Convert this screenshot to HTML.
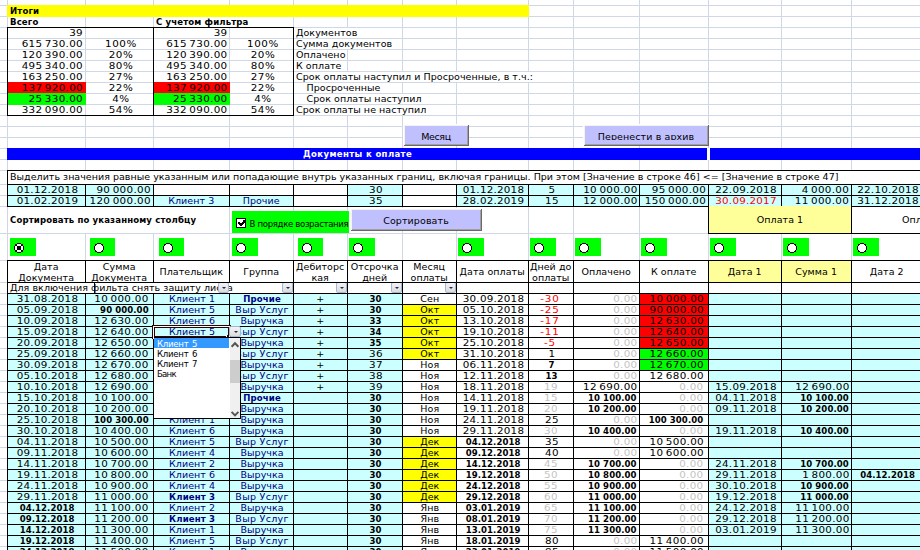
<!DOCTYPE html>
<html lang="ru"><head><meta charset="utf-8"><title>Документы к оплате</title><style>
html,body{margin:0;padding:0;background:#fff;}
body{width:920px;height:550px;overflow:hidden;position:relative;font-family:"DejaVu Sans","Liberation Sans",sans-serif;font-size:9.5px;color:#000;}
.r{position:absolute;}
.t{position:absolute;white-space:nowrap;overflow:visible;letter-spacing:0.055px;}
.n{letter-spacing:0.3px;word-spacing:-1.1px;transform:scaleX(1.09);}
.d{letter-spacing:0.2px;}
.b{font-family:"DejaVu Sans Condensed","DejaVu Sans","Liberation Sans",sans-serif;font-weight:bold;letter-spacing:0.14px;}
.bn{font-family:"DejaVu Sans Condensed","DejaVu Sans","Liberation Sans",sans-serif;font-weight:bold;letter-spacing:0.08px;}
.ctl{font-family:"DejaVu Sans Condensed","Liberation Sans",sans-serif;font-size:9.5px;letter-spacing:-0.33px;}
.btn{position:absolute;box-sizing:border-box;background:#c0c0ff;box-shadow:inset 1px 1px 0 #fff,inset -1px -1px 0 #696969,inset 2px 2px 0 #f4f4ea,inset -2px -2px 0 #a0a0a4;text-align:center;overflow:hidden;}
.btn span{position:relative;display:inline-block;line-height:11px;white-space:nowrap;letter-spacing:0.1px;}
.cb{position:absolute;width:10px;height:10px;box-sizing:border-box;background:#fff;border:1px solid #000;}
.cb svg{position:absolute;left:-1px;top:-1px;}
.fb{position:absolute;width:11px;height:11px;box-sizing:border-box;border:1px solid #a3b6da;border-radius:2px;background:linear-gradient(#f3f3f1,#dcdcda);}
.fb i{position:absolute;left:2.6px;top:3.9px;width:0;height:0;border-left:2.4px solid transparent;border-right:2.4px solid transparent;border-top:2.4px solid #242468;}
</style></head><body>
<div class="r" style="left:0px;top:5px;width:920px;height:1px;background:#d0d7e5;"></div>
<div class="r" style="left:0px;top:16px;width:920px;height:1px;background:#d0d7e5;"></div>
<div class="r" style="left:0px;top:27px;width:920px;height:1px;background:#d0d7e5;"></div>
<div class="r" style="left:0px;top:38px;width:920px;height:1px;background:#d0d7e5;"></div>
<div class="r" style="left:0px;top:49px;width:920px;height:1px;background:#d0d7e5;"></div>
<div class="r" style="left:0px;top:60px;width:920px;height:1px;background:#d0d7e5;"></div>
<div class="r" style="left:0px;top:71px;width:920px;height:1px;background:#d0d7e5;"></div>
<div class="r" style="left:0px;top:82px;width:920px;height:1px;background:#d0d7e5;"></div>
<div class="r" style="left:0px;top:93px;width:920px;height:1px;background:#d0d7e5;"></div>
<div class="r" style="left:0px;top:104px;width:920px;height:1px;background:#d0d7e5;"></div>
<div class="r" style="left:0px;top:115px;width:920px;height:1px;background:#d0d7e5;"></div>
<div class="r" style="left:0px;top:126px;width:920px;height:1px;background:#d0d7e5;"></div>
<div class="r" style="left:0px;top:137px;width:920px;height:1px;background:#d0d7e5;"></div>
<div class="r" style="left:0px;top:148px;width:920px;height:1px;background:#d0d7e5;"></div>
<div class="r" style="left:0px;top:159px;width:920px;height:1px;background:#d0d7e5;"></div>
<div class="r" style="left:0px;top:170px;width:920px;height:1px;background:#d0d7e5;"></div>
<div class="r" style="left:0px;top:184px;width:920px;height:1px;background:#d0d7e5;"></div>
<div class="r" style="left:0px;top:195px;width:920px;height:1px;background:#d0d7e5;"></div>
<div class="r" style="left:0px;top:206px;width:920px;height:1px;background:#d0d7e5;"></div>
<div class="r" style="left:0px;top:233px;width:920px;height:1px;background:#d0d7e5;"></div>
<div class="r" style="left:0px;top:260px;width:920px;height:1px;background:#d0d7e5;"></div>
<div class="r" style="left:0px;top:282px;width:920px;height:1px;background:#d0d7e5;"></div>
<div class="r" style="left:0px;top:293px;width:920px;height:1px;background:#d0d7e5;"></div>
<div class="r" style="left:0px;top:304px;width:920px;height:1px;background:#d0d7e5;"></div>
<div class="r" style="left:0px;top:315px;width:920px;height:1px;background:#d0d7e5;"></div>
<div class="r" style="left:0px;top:326px;width:920px;height:1px;background:#d0d7e5;"></div>
<div class="r" style="left:0px;top:337px;width:920px;height:1px;background:#d0d7e5;"></div>
<div class="r" style="left:0px;top:348px;width:920px;height:1px;background:#d0d7e5;"></div>
<div class="r" style="left:0px;top:359px;width:920px;height:1px;background:#d0d7e5;"></div>
<div class="r" style="left:0px;top:370px;width:920px;height:1px;background:#d0d7e5;"></div>
<div class="r" style="left:0px;top:381px;width:920px;height:1px;background:#d0d7e5;"></div>
<div class="r" style="left:0px;top:392px;width:920px;height:1px;background:#d0d7e5;"></div>
<div class="r" style="left:0px;top:403px;width:920px;height:1px;background:#d0d7e5;"></div>
<div class="r" style="left:0px;top:414px;width:920px;height:1px;background:#d0d7e5;"></div>
<div class="r" style="left:0px;top:425px;width:920px;height:1px;background:#d0d7e5;"></div>
<div class="r" style="left:0px;top:436px;width:920px;height:1px;background:#d0d7e5;"></div>
<div class="r" style="left:0px;top:447px;width:920px;height:1px;background:#d0d7e5;"></div>
<div class="r" style="left:0px;top:458px;width:920px;height:1px;background:#d0d7e5;"></div>
<div class="r" style="left:0px;top:469px;width:920px;height:1px;background:#d0d7e5;"></div>
<div class="r" style="left:0px;top:480px;width:920px;height:1px;background:#d0d7e5;"></div>
<div class="r" style="left:0px;top:491px;width:920px;height:1px;background:#d0d7e5;"></div>
<div class="r" style="left:0px;top:502px;width:920px;height:1px;background:#d0d7e5;"></div>
<div class="r" style="left:0px;top:513px;width:920px;height:1px;background:#d0d7e5;"></div>
<div class="r" style="left:0px;top:524px;width:920px;height:1px;background:#d0d7e5;"></div>
<div class="r" style="left:0px;top:535px;width:920px;height:1px;background:#d0d7e5;"></div>
<div class="r" style="left:0px;top:546px;width:920px;height:1px;background:#d0d7e5;"></div>
<div class="r" style="left:7px;top:0px;width:1px;height:550px;background:#d0d7e5;"></div>
<div class="r" style="left:85px;top:0px;width:1px;height:550px;background:#d0d7e5;"></div>
<div class="r" style="left:153px;top:0px;width:1px;height:550px;background:#d0d7e5;"></div>
<div class="r" style="left:229px;top:0px;width:1px;height:550px;background:#d0d7e5;"></div>
<div class="r" style="left:293px;top:0px;width:1px;height:550px;background:#d0d7e5;"></div>
<div class="r" style="left:347px;top:0px;width:1px;height:550px;background:#d0d7e5;"></div>
<div class="r" style="left:402px;top:0px;width:1px;height:550px;background:#d0d7e5;"></div>
<div class="r" style="left:456px;top:0px;width:1px;height:550px;background:#d0d7e5;"></div>
<div class="r" style="left:528px;top:0px;width:1px;height:550px;background:#d0d7e5;"></div>
<div class="r" style="left:573px;top:0px;width:1px;height:550px;background:#d0d7e5;"></div>
<div class="r" style="left:639px;top:0px;width:1px;height:550px;background:#d0d7e5;"></div>
<div class="r" style="left:708px;top:0px;width:1px;height:550px;background:#d0d7e5;"></div>
<div class="r" style="left:781px;top:0px;width:1px;height:550px;background:#d0d7e5;"></div>
<div class="r" style="left:851px;top:0px;width:1px;height:550px;background:#d0d7e5;"></div>
<div class="r" style="left:7px;top:5px;width:522px;height:12px;background:#ffff00;"></div>
<div class="t b" style="left:10px;top:4.5px;width:200px;height:11px;line-height:11px;">Итоги</div>
<div class="t b" style="left:10px;top:15.5px;width:200px;height:11px;line-height:11px;">Всего</div>
<div class="r" style="left:229px;top:17px;width:1px;height:10px;background:#fff;"></div>
<div class="t b" style="left:156px;top:15.5px;width:200px;height:11px;line-height:11px;">С учетом фильтра</div>
<div class="r" style="left:7px;top:82px;width:79px;height:12px;background:#ff0000;"></div>
<div class="r" style="left:153px;top:82px;width:77px;height:12px;background:#ff0000;"></div>
<div class="r" style="left:7px;top:93px;width:79px;height:12px;background:#00ff00;"></div>
<div class="r" style="left:153px;top:93px;width:77px;height:12px;background:#00ff00;"></div>
<div class="t n" style="left:8px;top:26.5px;width:75px;height:11px;line-height:11px;transform-origin:100% 50%;text-align:right;">39</div>
<div class="t n" style="left:154px;top:26.5px;width:73.5px;height:11px;line-height:11px;transform-origin:100% 50%;text-align:right;">39</div>
<div class="r" style="left:347px;top:28px;width:1px;height:10px;background:#fff;"></div>
<div class="t " style="left:296px;top:26.5px;width:400px;height:11px;line-height:11px;">Документов</div>
<div class="t n" style="left:8px;top:37.5px;width:75px;height:11px;line-height:11px;transform-origin:100% 50%;text-align:right;">615 730.00</div>
<div class="t n" style="left:154px;top:37.5px;width:73.5px;height:11px;line-height:11px;transform-origin:100% 50%;text-align:right;">615 730.00</div>
<div class="t n" style="left:86.6px;top:37.5px;width:68px;height:11px;line-height:11px;transform-origin:50% 50%;text-align:center;letter-spacing:0.5px;">100%</div>
<div class="t n" style="left:230.6px;top:37.5px;width:64px;height:11px;line-height:11px;transform-origin:50% 50%;text-align:center;letter-spacing:0.5px;">100%</div>
<div class="r" style="left:347px;top:39px;width:1px;height:10px;background:#fff;"></div>
<div class="t " style="left:296px;top:37.5px;width:400px;height:11px;line-height:11px;">Сумма документов</div>
<div class="t n" style="left:8px;top:48.5px;width:75px;height:11px;line-height:11px;transform-origin:100% 50%;text-align:right;">120 390.00</div>
<div class="t n" style="left:154px;top:48.5px;width:73.5px;height:11px;line-height:11px;transform-origin:100% 50%;text-align:right;">120 390.00</div>
<div class="t n" style="left:86.6px;top:48.5px;width:68px;height:11px;line-height:11px;transform-origin:50% 50%;text-align:center;letter-spacing:0.5px;">20%</div>
<div class="t n" style="left:230.6px;top:48.5px;width:64px;height:11px;line-height:11px;transform-origin:50% 50%;text-align:center;letter-spacing:0.5px;">20%</div>
<div class="t " style="left:296px;top:48.5px;width:400px;height:11px;line-height:11px;">Оплачено</div>
<div class="t n" style="left:8px;top:59.5px;width:75px;height:11px;line-height:11px;transform-origin:100% 50%;text-align:right;">495 340.00</div>
<div class="t n" style="left:154px;top:59.5px;width:73.5px;height:11px;line-height:11px;transform-origin:100% 50%;text-align:right;">495 340.00</div>
<div class="t n" style="left:86.6px;top:59.5px;width:68px;height:11px;line-height:11px;transform-origin:50% 50%;text-align:center;letter-spacing:0.5px;">80%</div>
<div class="t n" style="left:230.6px;top:59.5px;width:64px;height:11px;line-height:11px;transform-origin:50% 50%;text-align:center;letter-spacing:0.5px;">80%</div>
<div class="t " style="left:296px;top:59.5px;width:400px;height:11px;line-height:11px;">К оплате</div>
<div class="t n" style="left:8px;top:70.5px;width:75px;height:11px;line-height:11px;transform-origin:100% 50%;text-align:right;">163 250.00</div>
<div class="t n" style="left:154px;top:70.5px;width:73.5px;height:11px;line-height:11px;transform-origin:100% 50%;text-align:right;">163 250.00</div>
<div class="t n" style="left:86.6px;top:70.5px;width:68px;height:11px;line-height:11px;transform-origin:50% 50%;text-align:center;letter-spacing:0.5px;">27%</div>
<div class="t n" style="left:230.6px;top:70.5px;width:64px;height:11px;line-height:11px;transform-origin:50% 50%;text-align:center;letter-spacing:0.5px;">27%</div>
<div class="r" style="left:347px;top:72px;width:1px;height:10px;background:#fff;"></div>
<div class="r" style="left:402px;top:72px;width:1px;height:10px;background:#fff;"></div>
<div class="r" style="left:456px;top:72px;width:1px;height:10px;background:#fff;"></div>
<div class="r" style="left:528px;top:72px;width:1px;height:10px;background:#fff;"></div>
<div class="t " style="left:296px;top:70.5px;width:400px;height:11px;line-height:11px;">Срок оплаты наступил и Просроченные, в т.ч.:</div>
<div class="t n" style="left:8px;top:81.5px;width:75px;height:11px;line-height:11px;transform-origin:100% 50%;text-align:right;">137 920.00</div>
<div class="t n" style="left:154px;top:81.5px;width:73.5px;height:11px;line-height:11px;transform-origin:100% 50%;text-align:right;">137 920.00</div>
<div class="t n" style="left:86.6px;top:81.5px;width:68px;height:11px;line-height:11px;transform-origin:50% 50%;text-align:center;letter-spacing:0.5px;">22%</div>
<div class="t n" style="left:230.6px;top:81.5px;width:64px;height:11px;line-height:11px;transform-origin:50% 50%;text-align:center;letter-spacing:0.5px;">22%</div>
<div class="r" style="left:347px;top:83px;width:1px;height:10px;background:#fff;"></div>
<div class="t " style="left:306.5px;top:81.5px;width:400px;height:11px;line-height:11px;">Просроченные</div>
<div class="t n" style="left:8px;top:92.5px;width:75px;height:11px;line-height:11px;transform-origin:100% 50%;text-align:right;">25 330.00</div>
<div class="t n" style="left:154px;top:92.5px;width:73.5px;height:11px;line-height:11px;transform-origin:100% 50%;text-align:right;">25 330.00</div>
<div class="t n" style="left:86.6px;top:92.5px;width:68px;height:11px;line-height:11px;transform-origin:50% 50%;text-align:center;letter-spacing:0.5px;">4%</div>
<div class="t n" style="left:230.6px;top:92.5px;width:64px;height:11px;line-height:11px;transform-origin:50% 50%;text-align:center;letter-spacing:0.5px;">4%</div>
<div class="r" style="left:347px;top:94px;width:1px;height:10px;background:#fff;"></div>
<div class="r" style="left:402px;top:94px;width:1px;height:10px;background:#fff;"></div>
<div class="t " style="left:306.5px;top:92.5px;width:400px;height:11px;line-height:11px;">Срок оплаты наступил</div>
<div class="t n" style="left:8px;top:103.5px;width:75px;height:11px;line-height:11px;transform-origin:100% 50%;text-align:right;">332 090.00</div>
<div class="t n" style="left:154px;top:103.5px;width:73.5px;height:11px;line-height:11px;transform-origin:100% 50%;text-align:right;">332 090.00</div>
<div class="t n" style="left:86.6px;top:103.5px;width:68px;height:11px;line-height:11px;transform-origin:50% 50%;text-align:center;letter-spacing:0.5px;">54%</div>
<div class="t n" style="left:230.6px;top:103.5px;width:64px;height:11px;line-height:11px;transform-origin:50% 50%;text-align:center;letter-spacing:0.5px;">54%</div>
<div class="r" style="left:347px;top:105px;width:1px;height:10px;background:#fff;"></div>
<div class="r" style="left:402px;top:105px;width:1px;height:10px;background:#fff;"></div>
<div class="t " style="left:296px;top:103.5px;width:400px;height:11px;line-height:11px;">Срок оплаты не наступил</div>
<div class="r" style="left:7px;top:27px;width:287px;height:1px;background:#000;"></div>
<div class="r" style="left:7px;top:115px;width:287px;height:1px;background:#000;"></div>
<div class="r" style="left:7px;top:27px;width:1px;height:89px;background:#000;"></div>
<div class="r" style="left:153px;top:27px;width:1px;height:89px;background:#000;"></div>
<div class="r" style="left:293px;top:27px;width:1px;height:89px;background:#000;"></div>
<div class="btn" style="left:403px;top:124px;width:66px;height:22px;"><span style="top:6.6px;letter-spacing:-0.35px;">Месяц</span></div>
<div class="btn" style="left:583px;top:124px;width:126px;height:22px;"><span style="top:6.6px;clip-path:inset(0 0 1.5px 0);">Перенести в архив</span></div>
<div class="r" style="left:7px;top:148px;width:700px;height:12px;background:#0000ff;"></div>
<div class="r" style="left:707px;top:148px;width:3px;height:12px;background:#fff;"></div>
<div class="r" style="left:710px;top:148px;width:210px;height:12px;background:#0000ff;"></div>
<div class="t b" style="left:257.59999999999997px;top:147.5px;width:200px;height:11px;line-height:11px;text-align:center;color:#fff;letter-spacing:0.36px;">Документы к оплате</div>
<div class="r" style="left:7px;top:170px;width:913px;height:15px;background:#fff;"></div>
<div class="t " style="left:10px;top:171px;width:900px;height:11px;line-height:11px;letter-spacing:0.025px;">Выделить значения равные указанным или попадающие внутрь указанных границ, включая границы. При этом [Значение в строке 46] &lt;= [Значение в строке 47]</div>
<div class="r" style="left:7px;top:184px;width:79px;height:12px;background:#ccffff;"></div>
<div class="t n d" style="left:8.6px;top:183.5px;width:77px;height:11px;line-height:11px;transform-origin:50% 50%;text-align:center;">01.12.2018</div>
<div class="r" style="left:85px;top:184px;width:69px;height:12px;background:#ccffff;"></div>
<div class="t n" style="left:86px;top:183.5px;width:64.89999999999999px;height:11px;line-height:11px;transform-origin:100% 50%;text-align:right;">90 000.00</div>
<div class="r" style="left:153px;top:184px;width:77px;height:12px;background:#fff;"></div>
<div class="r" style="left:229px;top:184px;width:65px;height:12px;background:#fff;"></div>
<div class="r" style="left:293px;top:184px;width:55px;height:12px;background:#fff;"></div>
<div class="r" style="left:347px;top:184px;width:56px;height:12px;background:#ccffff;"></div>
<div class="t n" style="left:348.6px;top:183.5px;width:54px;height:11px;line-height:11px;transform-origin:50% 50%;text-align:center;">30</div>
<div class="r" style="left:402px;top:184px;width:55px;height:12px;background:#fff;"></div>
<div class="r" style="left:456px;top:184px;width:73px;height:12px;background:#ccffff;"></div>
<div class="t n d" style="left:457.6px;top:183.5px;width:71px;height:11px;line-height:11px;transform-origin:50% 50%;text-align:center;">01.12.2018</div>
<div class="r" style="left:528px;top:184px;width:46px;height:12px;background:#ccffff;"></div>
<div class="t n" style="left:529.6px;top:183.5px;width:44px;height:11px;line-height:11px;transform-origin:50% 50%;text-align:center;">5</div>
<div class="r" style="left:573px;top:184px;width:67px;height:12px;background:#ccffff;"></div>
<div class="t n" style="left:574px;top:183.5px;width:63.6px;height:11px;line-height:11px;transform-origin:100% 50%;text-align:right;">10 000.00</div>
<div class="r" style="left:639px;top:184px;width:70px;height:12px;background:#ccffff;"></div>
<div class="t n" style="left:640px;top:183.5px;width:66.19999999999999px;height:11px;line-height:11px;transform-origin:100% 50%;text-align:right;">95 000.00</div>
<div class="r" style="left:708px;top:184px;width:74px;height:12px;background:#ccffff;"></div>
<div class="t n d" style="left:709.6px;top:183.5px;width:72px;height:11px;line-height:11px;transform-origin:50% 50%;text-align:center;">22.09.2018</div>
<div class="r" style="left:781px;top:184px;width:71px;height:12px;background:#ccffff;"></div>
<div class="t n" style="left:782px;top:183.5px;width:67.19999999999999px;height:11px;line-height:11px;transform-origin:100% 50%;text-align:right;">4 000.00</div>
<div class="r" style="left:851px;top:184px;width:72px;height:12px;background:#ccffff;"></div>
<div class="t n d" style="left:852.6px;top:183.5px;width:70px;height:11px;line-height:11px;transform-origin:50% 50%;text-align:center;">22.10.2018</div>
<div class="r" style="left:7px;top:195px;width:79px;height:12px;background:#ccffff;"></div>
<div class="t n d" style="left:8.6px;top:194.5px;width:77px;height:11px;line-height:11px;transform-origin:50% 50%;text-align:center;">01.02.2019</div>
<div class="r" style="left:85px;top:195px;width:69px;height:12px;background:#ccffff;"></div>
<div class="t n" style="left:86px;top:194.5px;width:64.89999999999999px;height:11px;line-height:11px;transform-origin:100% 50%;text-align:right;">120 000.00</div>
<div class="r" style="left:153px;top:195px;width:77px;height:12px;background:#ccffff;"></div>
<div class="t " style="left:153.7px;top:194.5px;width:75px;height:11px;line-height:11px;text-align:center;color:#000080;">Клиент 3</div>
<div class="r" style="left:229px;top:195px;width:65px;height:12px;background:#ccffff;"></div>
<div class="t " style="left:229.7px;top:194.5px;width:63px;height:11px;line-height:11px;text-align:center;color:#000080;">Прочие</div>
<div class="r" style="left:293px;top:195px;width:55px;height:12px;background:#fff;"></div>
<div class="r" style="left:347px;top:195px;width:56px;height:12px;background:#ccffff;"></div>
<div class="t n" style="left:348.6px;top:194.5px;width:54px;height:11px;line-height:11px;transform-origin:50% 50%;text-align:center;">35</div>
<div class="r" style="left:402px;top:195px;width:55px;height:12px;background:#fff;"></div>
<div class="r" style="left:456px;top:195px;width:73px;height:12px;background:#ccffff;"></div>
<div class="t n d" style="left:457.6px;top:194.5px;width:71px;height:11px;line-height:11px;transform-origin:50% 50%;text-align:center;">28.02.2019</div>
<div class="r" style="left:528px;top:195px;width:46px;height:12px;background:#ccffff;"></div>
<div class="t n" style="left:529.6px;top:194.5px;width:44px;height:11px;line-height:11px;transform-origin:50% 50%;text-align:center;">15</div>
<div class="r" style="left:573px;top:195px;width:67px;height:12px;background:#ccffff;"></div>
<div class="t n" style="left:574px;top:194.5px;width:63.6px;height:11px;line-height:11px;transform-origin:100% 50%;text-align:right;">12 000.00</div>
<div class="r" style="left:639px;top:195px;width:70px;height:12px;background:#ccffff;"></div>
<div class="t n" style="left:640px;top:194.5px;width:66.19999999999999px;height:11px;line-height:11px;transform-origin:100% 50%;text-align:right;">150 000.00</div>
<div class="r" style="left:708px;top:195px;width:74px;height:12px;background:#ccffff;"></div>
<div class="t n d" style="left:709.6px;top:194.5px;width:72px;height:11px;line-height:11px;transform-origin:50% 50%;text-align:center;color:#ff0000;">30.09.2017</div>
<div class="r" style="left:781px;top:195px;width:71px;height:12px;background:#ccffff;"></div>
<div class="t n" style="left:782px;top:194.5px;width:67.19999999999999px;height:11px;line-height:11px;transform-origin:100% 50%;text-align:right;">11 000.00</div>
<div class="r" style="left:851px;top:195px;width:72px;height:12px;background:#ccffff;"></div>
<div class="t n d" style="left:852.6px;top:194.5px;width:70px;height:11px;line-height:11px;transform-origin:50% 50%;text-align:center;">31.12.2018</div>
<div class="r" style="left:7px;top:170px;width:913px;height:1px;background:#000;"></div>
<div class="r" style="left:7px;top:184px;width:913px;height:1px;background:#000;"></div>
<div class="r" style="left:7px;top:195px;width:913px;height:1px;background:#000;"></div>
<div class="r" style="left:7px;top:206px;width:913px;height:1px;background:#000;"></div>
<div class="r" style="left:7px;top:170px;width:1px;height:37px;background:#000;"></div>
<div class="r" style="left:85px;top:184px;width:1px;height:23px;background:#000;"></div>
<div class="r" style="left:153px;top:184px;width:1px;height:23px;background:#000;"></div>
<div class="r" style="left:229px;top:184px;width:1px;height:23px;background:#000;"></div>
<div class="r" style="left:293px;top:184px;width:1px;height:23px;background:#000;"></div>
<div class="r" style="left:347px;top:184px;width:1px;height:23px;background:#000;"></div>
<div class="r" style="left:402px;top:184px;width:1px;height:23px;background:#000;"></div>
<div class="r" style="left:456px;top:184px;width:1px;height:23px;background:#000;"></div>
<div class="r" style="left:528px;top:184px;width:1px;height:23px;background:#000;"></div>
<div class="r" style="left:573px;top:184px;width:1px;height:23px;background:#000;"></div>
<div class="r" style="left:639px;top:184px;width:1px;height:23px;background:#000;"></div>
<div class="r" style="left:708px;top:184px;width:1px;height:23px;background:#000;"></div>
<div class="r" style="left:781px;top:184px;width:1px;height:23px;background:#000;"></div>
<div class="r" style="left:851px;top:184px;width:1px;height:23px;background:#000;"></div>
<div class="r" style="left:922px;top:184px;width:1px;height:23px;background:#000;"></div>
<div class="r" style="left:85px;top:207px;width:1px;height:26px;background:#fff;"></div>
<div class="r" style="left:153px;top:207px;width:1px;height:26px;background:#fff;"></div>
<div class="t b" style="left:10px;top:214px;width:300px;height:11px;line-height:11px;">Сортировать по указанному столбцу</div>
<div class="r" style="left:232px;top:211px;width:117px;height:22px;background:#00ff00;"></div>
<svg class="r" style="left:236px;top:218px;" width="10" height="10" viewBox="0 0 10 10" shape-rendering="crispEdges"><rect x="0" y="0" width="10" height="10" fill="#000"/><rect x="1" y="1" width="8" height="8" fill="#fff"/><g fill="#000"><rect x="2" y="4" width="1.5" height="2"/><rect x="3" y="5" width="1.5" height="2"/><rect x="4" y="6" width="1.5" height="2"/><rect x="5" y="5" width="1.5" height="2"/><rect x="6" y="4" width="1.5" height="2"/><rect x="7" y="2" width="1.5" height="3"/></g></svg>
<div class="t ctl" style="left:249.6px;top:217.5px;width:110px;height:11px;line-height:11px;">В порядке возрастания</div>
<div class="btn" style="left:350px;top:208px;width:132px;height:23px;"><span style="top:7px;">Сортировать</span></div>
<div class="r" style="left:708px;top:206px;width:144px;height:28px;background:#ffff99;"></div>
<div class="r" style="left:852px;top:207px;width:68px;height:26px;background:#fff;"></div>
<div class="t " style="left:709.0px;top:214px;width:142px;height:11px;line-height:11px;text-align:center;">Оплата 1</div>
<div class="t " style="left:902px;top:214px;width:60px;height:11px;line-height:11px;">Оплата 2</div>
<div class="r" style="left:708px;top:206px;width:1px;height:28px;background:#000;"></div>
<div class="r" style="left:851px;top:206px;width:1px;height:28px;background:#000;"></div>
<div class="r" style="left:708px;top:233px;width:212px;height:1px;background:#000;"></div>
<div class="r" style="left:10px;top:238px;width:26px;height:18px;background:#00ff00;"></div>
<svg class="r" style="left:14px;top:243px;" width="10" height="10" viewBox="0 0 10 10" shape-rendering="crispEdges" fill="#000"><path d="M3 0h4v1h2v2h1v4h-1v2h-2v1h-4v-1h-2v-2h-1v-4h1v-2h2z" fill="#fff"/><rect x="3" y="0" width="1" height="1"/><rect x="4" y="0" width="1" height="1"/><rect x="5" y="0" width="1" height="1"/><rect x="6" y="0" width="1" height="1"/><rect x="1" y="1" width="1" height="1"/><rect x="2" y="1" width="1" height="1"/><rect x="7" y="1" width="1" height="1"/><rect x="8" y="1" width="1" height="1"/><rect x="1" y="2" width="1" height="1"/><rect x="2" y="2" width="1" height="1"/><rect x="7" y="2" width="1" height="1"/><rect x="8" y="2" width="1" height="1"/><rect x="0" y="3" width="1" height="1"/><rect x="3" y="3" width="1" height="1"/><rect x="4" y="3" width="1" height="1"/><rect x="5" y="3" width="1" height="1"/><rect x="6" y="3" width="1" height="1"/><rect x="9" y="3" width="1" height="1"/><rect x="0" y="4" width="1" height="1"/><rect x="3" y="4" width="1" height="1"/><rect x="4" y="4" width="1" height="1"/><rect x="5" y="4" width="1" height="1"/><rect x="6" y="4" width="1" height="1"/><rect x="9" y="4" width="1" height="1"/><rect x="0" y="5" width="1" height="1"/><rect x="3" y="5" width="1" height="1"/><rect x="4" y="5" width="1" height="1"/><rect x="5" y="5" width="1" height="1"/><rect x="6" y="5" width="1" height="1"/><rect x="9" y="5" width="1" height="1"/><rect x="0" y="6" width="1" height="1"/><rect x="3" y="6" width="1" height="1"/><rect x="4" y="6" width="1" height="1"/><rect x="5" y="6" width="1" height="1"/><rect x="6" y="6" width="1" height="1"/><rect x="9" y="6" width="1" height="1"/><rect x="1" y="7" width="1" height="1"/><rect x="2" y="7" width="1" height="1"/><rect x="7" y="7" width="1" height="1"/><rect x="8" y="7" width="1" height="1"/><rect x="1" y="8" width="1" height="1"/><rect x="2" y="8" width="1" height="1"/><rect x="7" y="8" width="1" height="1"/><rect x="8" y="8" width="1" height="1"/><rect x="3" y="9" width="1" height="1"/><rect x="4" y="9" width="1" height="1"/><rect x="5" y="9" width="1" height="1"/><rect x="6" y="9" width="1" height="1"/></svg>
<div class="r" style="left:90px;top:238px;width:25px;height:18px;background:#00ff00;"></div>
<svg class="r" style="left:94px;top:243px;" width="10" height="10" viewBox="0 0 10 10" shape-rendering="crispEdges" fill="#000"><path d="M3 0h4v1h2v2h1v4h-1v2h-2v1h-4v-1h-2v-2h-1v-4h1v-2h2z" fill="#fff"/><rect x="3" y="0" width="1" height="1"/><rect x="4" y="0" width="1" height="1"/><rect x="5" y="0" width="1" height="1"/><rect x="6" y="0" width="1" height="1"/><rect x="1" y="1" width="1" height="1"/><rect x="2" y="1" width="1" height="1"/><rect x="7" y="1" width="1" height="1"/><rect x="8" y="1" width="1" height="1"/><rect x="1" y="2" width="1" height="1"/><rect x="8" y="2" width="1" height="1"/><rect x="0" y="3" width="1" height="1"/><rect x="9" y="3" width="1" height="1"/><rect x="0" y="4" width="1" height="1"/><rect x="9" y="4" width="1" height="1"/><rect x="0" y="5" width="1" height="1"/><rect x="9" y="5" width="1" height="1"/><rect x="0" y="6" width="1" height="1"/><rect x="9" y="6" width="1" height="1"/><rect x="1" y="7" width="1" height="1"/><rect x="8" y="7" width="1" height="1"/><rect x="1" y="8" width="1" height="1"/><rect x="2" y="8" width="1" height="1"/><rect x="7" y="8" width="1" height="1"/><rect x="8" y="8" width="1" height="1"/><rect x="3" y="9" width="1" height="1"/><rect x="4" y="9" width="1" height="1"/><rect x="5" y="9" width="1" height="1"/><rect x="6" y="9" width="1" height="1"/></svg>
<div class="r" style="left:159px;top:238px;width:25px;height:18px;background:#00ff00;"></div>
<svg class="r" style="left:163px;top:243px;" width="10" height="10" viewBox="0 0 10 10" shape-rendering="crispEdges" fill="#000"><path d="M3 0h4v1h2v2h1v4h-1v2h-2v1h-4v-1h-2v-2h-1v-4h1v-2h2z" fill="#fff"/><rect x="3" y="0" width="1" height="1"/><rect x="4" y="0" width="1" height="1"/><rect x="5" y="0" width="1" height="1"/><rect x="6" y="0" width="1" height="1"/><rect x="1" y="1" width="1" height="1"/><rect x="2" y="1" width="1" height="1"/><rect x="7" y="1" width="1" height="1"/><rect x="8" y="1" width="1" height="1"/><rect x="1" y="2" width="1" height="1"/><rect x="8" y="2" width="1" height="1"/><rect x="0" y="3" width="1" height="1"/><rect x="9" y="3" width="1" height="1"/><rect x="0" y="4" width="1" height="1"/><rect x="9" y="4" width="1" height="1"/><rect x="0" y="5" width="1" height="1"/><rect x="9" y="5" width="1" height="1"/><rect x="0" y="6" width="1" height="1"/><rect x="9" y="6" width="1" height="1"/><rect x="1" y="7" width="1" height="1"/><rect x="8" y="7" width="1" height="1"/><rect x="1" y="8" width="1" height="1"/><rect x="2" y="8" width="1" height="1"/><rect x="7" y="8" width="1" height="1"/><rect x="8" y="8" width="1" height="1"/><rect x="3" y="9" width="1" height="1"/><rect x="4" y="9" width="1" height="1"/><rect x="5" y="9" width="1" height="1"/><rect x="6" y="9" width="1" height="1"/></svg>
<div class="r" style="left:232px;top:238px;width:26px;height:18px;background:#00ff00;"></div>
<svg class="r" style="left:236px;top:243px;" width="10" height="10" viewBox="0 0 10 10" shape-rendering="crispEdges" fill="#000"><path d="M3 0h4v1h2v2h1v4h-1v2h-2v1h-4v-1h-2v-2h-1v-4h1v-2h2z" fill="#fff"/><rect x="3" y="0" width="1" height="1"/><rect x="4" y="0" width="1" height="1"/><rect x="5" y="0" width="1" height="1"/><rect x="6" y="0" width="1" height="1"/><rect x="1" y="1" width="1" height="1"/><rect x="2" y="1" width="1" height="1"/><rect x="7" y="1" width="1" height="1"/><rect x="8" y="1" width="1" height="1"/><rect x="1" y="2" width="1" height="1"/><rect x="8" y="2" width="1" height="1"/><rect x="0" y="3" width="1" height="1"/><rect x="9" y="3" width="1" height="1"/><rect x="0" y="4" width="1" height="1"/><rect x="9" y="4" width="1" height="1"/><rect x="0" y="5" width="1" height="1"/><rect x="9" y="5" width="1" height="1"/><rect x="0" y="6" width="1" height="1"/><rect x="9" y="6" width="1" height="1"/><rect x="1" y="7" width="1" height="1"/><rect x="8" y="7" width="1" height="1"/><rect x="1" y="8" width="1" height="1"/><rect x="2" y="8" width="1" height="1"/><rect x="7" y="8" width="1" height="1"/><rect x="8" y="8" width="1" height="1"/><rect x="3" y="9" width="1" height="1"/><rect x="4" y="9" width="1" height="1"/><rect x="5" y="9" width="1" height="1"/><rect x="6" y="9" width="1" height="1"/></svg>
<div class="r" style="left:298px;top:238px;width:25px;height:18px;background:#00ff00;"></div>
<svg class="r" style="left:302px;top:243px;" width="10" height="10" viewBox="0 0 10 10" shape-rendering="crispEdges" fill="#000"><path d="M3 0h4v1h2v2h1v4h-1v2h-2v1h-4v-1h-2v-2h-1v-4h1v-2h2z" fill="#fff"/><rect x="3" y="0" width="1" height="1"/><rect x="4" y="0" width="1" height="1"/><rect x="5" y="0" width="1" height="1"/><rect x="6" y="0" width="1" height="1"/><rect x="1" y="1" width="1" height="1"/><rect x="2" y="1" width="1" height="1"/><rect x="7" y="1" width="1" height="1"/><rect x="8" y="1" width="1" height="1"/><rect x="1" y="2" width="1" height="1"/><rect x="8" y="2" width="1" height="1"/><rect x="0" y="3" width="1" height="1"/><rect x="9" y="3" width="1" height="1"/><rect x="0" y="4" width="1" height="1"/><rect x="9" y="4" width="1" height="1"/><rect x="0" y="5" width="1" height="1"/><rect x="9" y="5" width="1" height="1"/><rect x="0" y="6" width="1" height="1"/><rect x="9" y="6" width="1" height="1"/><rect x="1" y="7" width="1" height="1"/><rect x="8" y="7" width="1" height="1"/><rect x="1" y="8" width="1" height="1"/><rect x="2" y="8" width="1" height="1"/><rect x="7" y="8" width="1" height="1"/><rect x="8" y="8" width="1" height="1"/><rect x="3" y="9" width="1" height="1"/><rect x="4" y="9" width="1" height="1"/><rect x="5" y="9" width="1" height="1"/><rect x="6" y="9" width="1" height="1"/></svg>
<div class="r" style="left:349px;top:238px;width:26px;height:18px;background:#00ff00;"></div>
<svg class="r" style="left:353px;top:243px;" width="10" height="10" viewBox="0 0 10 10" shape-rendering="crispEdges" fill="#000"><path d="M3 0h4v1h2v2h1v4h-1v2h-2v1h-4v-1h-2v-2h-1v-4h1v-2h2z" fill="#fff"/><rect x="3" y="0" width="1" height="1"/><rect x="4" y="0" width="1" height="1"/><rect x="5" y="0" width="1" height="1"/><rect x="6" y="0" width="1" height="1"/><rect x="1" y="1" width="1" height="1"/><rect x="2" y="1" width="1" height="1"/><rect x="7" y="1" width="1" height="1"/><rect x="8" y="1" width="1" height="1"/><rect x="1" y="2" width="1" height="1"/><rect x="8" y="2" width="1" height="1"/><rect x="0" y="3" width="1" height="1"/><rect x="9" y="3" width="1" height="1"/><rect x="0" y="4" width="1" height="1"/><rect x="9" y="4" width="1" height="1"/><rect x="0" y="5" width="1" height="1"/><rect x="9" y="5" width="1" height="1"/><rect x="0" y="6" width="1" height="1"/><rect x="9" y="6" width="1" height="1"/><rect x="1" y="7" width="1" height="1"/><rect x="8" y="7" width="1" height="1"/><rect x="1" y="8" width="1" height="1"/><rect x="2" y="8" width="1" height="1"/><rect x="7" y="8" width="1" height="1"/><rect x="8" y="8" width="1" height="1"/><rect x="3" y="9" width="1" height="1"/><rect x="4" y="9" width="1" height="1"/><rect x="5" y="9" width="1" height="1"/><rect x="6" y="9" width="1" height="1"/></svg>
<div class="r" style="left:458px;top:238px;width:26px;height:18px;background:#00ff00;"></div>
<svg class="r" style="left:462px;top:243px;" width="10" height="10" viewBox="0 0 10 10" shape-rendering="crispEdges" fill="#000"><path d="M3 0h4v1h2v2h1v4h-1v2h-2v1h-4v-1h-2v-2h-1v-4h1v-2h2z" fill="#fff"/><rect x="3" y="0" width="1" height="1"/><rect x="4" y="0" width="1" height="1"/><rect x="5" y="0" width="1" height="1"/><rect x="6" y="0" width="1" height="1"/><rect x="1" y="1" width="1" height="1"/><rect x="2" y="1" width="1" height="1"/><rect x="7" y="1" width="1" height="1"/><rect x="8" y="1" width="1" height="1"/><rect x="1" y="2" width="1" height="1"/><rect x="8" y="2" width="1" height="1"/><rect x="0" y="3" width="1" height="1"/><rect x="9" y="3" width="1" height="1"/><rect x="0" y="4" width="1" height="1"/><rect x="9" y="4" width="1" height="1"/><rect x="0" y="5" width="1" height="1"/><rect x="9" y="5" width="1" height="1"/><rect x="0" y="6" width="1" height="1"/><rect x="9" y="6" width="1" height="1"/><rect x="1" y="7" width="1" height="1"/><rect x="8" y="7" width="1" height="1"/><rect x="1" y="8" width="1" height="1"/><rect x="2" y="8" width="1" height="1"/><rect x="7" y="8" width="1" height="1"/><rect x="8" y="8" width="1" height="1"/><rect x="3" y="9" width="1" height="1"/><rect x="4" y="9" width="1" height="1"/><rect x="5" y="9" width="1" height="1"/><rect x="6" y="9" width="1" height="1"/></svg>
<div class="r" style="left:530px;top:238px;width:26px;height:18px;background:#00ff00;"></div>
<svg class="r" style="left:534px;top:243px;" width="10" height="10" viewBox="0 0 10 10" shape-rendering="crispEdges" fill="#000"><path d="M3 0h4v1h2v2h1v4h-1v2h-2v1h-4v-1h-2v-2h-1v-4h1v-2h2z" fill="#fff"/><rect x="3" y="0" width="1" height="1"/><rect x="4" y="0" width="1" height="1"/><rect x="5" y="0" width="1" height="1"/><rect x="6" y="0" width="1" height="1"/><rect x="1" y="1" width="1" height="1"/><rect x="2" y="1" width="1" height="1"/><rect x="7" y="1" width="1" height="1"/><rect x="8" y="1" width="1" height="1"/><rect x="1" y="2" width="1" height="1"/><rect x="8" y="2" width="1" height="1"/><rect x="0" y="3" width="1" height="1"/><rect x="9" y="3" width="1" height="1"/><rect x="0" y="4" width="1" height="1"/><rect x="9" y="4" width="1" height="1"/><rect x="0" y="5" width="1" height="1"/><rect x="9" y="5" width="1" height="1"/><rect x="0" y="6" width="1" height="1"/><rect x="9" y="6" width="1" height="1"/><rect x="1" y="7" width="1" height="1"/><rect x="8" y="7" width="1" height="1"/><rect x="1" y="8" width="1" height="1"/><rect x="2" y="8" width="1" height="1"/><rect x="7" y="8" width="1" height="1"/><rect x="8" y="8" width="1" height="1"/><rect x="3" y="9" width="1" height="1"/><rect x="4" y="9" width="1" height="1"/><rect x="5" y="9" width="1" height="1"/><rect x="6" y="9" width="1" height="1"/></svg>
<div class="r" style="left:575px;top:238px;width:26px;height:18px;background:#00ff00;"></div>
<svg class="r" style="left:579px;top:243px;" width="10" height="10" viewBox="0 0 10 10" shape-rendering="crispEdges" fill="#000"><path d="M3 0h4v1h2v2h1v4h-1v2h-2v1h-4v-1h-2v-2h-1v-4h1v-2h2z" fill="#fff"/><rect x="3" y="0" width="1" height="1"/><rect x="4" y="0" width="1" height="1"/><rect x="5" y="0" width="1" height="1"/><rect x="6" y="0" width="1" height="1"/><rect x="1" y="1" width="1" height="1"/><rect x="2" y="1" width="1" height="1"/><rect x="7" y="1" width="1" height="1"/><rect x="8" y="1" width="1" height="1"/><rect x="1" y="2" width="1" height="1"/><rect x="8" y="2" width="1" height="1"/><rect x="0" y="3" width="1" height="1"/><rect x="9" y="3" width="1" height="1"/><rect x="0" y="4" width="1" height="1"/><rect x="9" y="4" width="1" height="1"/><rect x="0" y="5" width="1" height="1"/><rect x="9" y="5" width="1" height="1"/><rect x="0" y="6" width="1" height="1"/><rect x="9" y="6" width="1" height="1"/><rect x="1" y="7" width="1" height="1"/><rect x="8" y="7" width="1" height="1"/><rect x="1" y="8" width="1" height="1"/><rect x="2" y="8" width="1" height="1"/><rect x="7" y="8" width="1" height="1"/><rect x="8" y="8" width="1" height="1"/><rect x="3" y="9" width="1" height="1"/><rect x="4" y="9" width="1" height="1"/><rect x="5" y="9" width="1" height="1"/><rect x="6" y="9" width="1" height="1"/></svg>
<div class="r" style="left:641px;top:238px;width:26px;height:18px;background:#00ff00;"></div>
<svg class="r" style="left:645px;top:243px;" width="10" height="10" viewBox="0 0 10 10" shape-rendering="crispEdges" fill="#000"><path d="M3 0h4v1h2v2h1v4h-1v2h-2v1h-4v-1h-2v-2h-1v-4h1v-2h2z" fill="#fff"/><rect x="3" y="0" width="1" height="1"/><rect x="4" y="0" width="1" height="1"/><rect x="5" y="0" width="1" height="1"/><rect x="6" y="0" width="1" height="1"/><rect x="1" y="1" width="1" height="1"/><rect x="2" y="1" width="1" height="1"/><rect x="7" y="1" width="1" height="1"/><rect x="8" y="1" width="1" height="1"/><rect x="1" y="2" width="1" height="1"/><rect x="8" y="2" width="1" height="1"/><rect x="0" y="3" width="1" height="1"/><rect x="9" y="3" width="1" height="1"/><rect x="0" y="4" width="1" height="1"/><rect x="9" y="4" width="1" height="1"/><rect x="0" y="5" width="1" height="1"/><rect x="9" y="5" width="1" height="1"/><rect x="0" y="6" width="1" height="1"/><rect x="9" y="6" width="1" height="1"/><rect x="1" y="7" width="1" height="1"/><rect x="8" y="7" width="1" height="1"/><rect x="1" y="8" width="1" height="1"/><rect x="2" y="8" width="1" height="1"/><rect x="7" y="8" width="1" height="1"/><rect x="8" y="8" width="1" height="1"/><rect x="3" y="9" width="1" height="1"/><rect x="4" y="9" width="1" height="1"/><rect x="5" y="9" width="1" height="1"/><rect x="6" y="9" width="1" height="1"/></svg>
<div class="r" style="left:710px;top:238px;width:26px;height:18px;background:#00ff00;"></div>
<svg class="r" style="left:714px;top:243px;" width="10" height="10" viewBox="0 0 10 10" shape-rendering="crispEdges" fill="#000"><path d="M3 0h4v1h2v2h1v4h-1v2h-2v1h-4v-1h-2v-2h-1v-4h1v-2h2z" fill="#fff"/><rect x="3" y="0" width="1" height="1"/><rect x="4" y="0" width="1" height="1"/><rect x="5" y="0" width="1" height="1"/><rect x="6" y="0" width="1" height="1"/><rect x="1" y="1" width="1" height="1"/><rect x="2" y="1" width="1" height="1"/><rect x="7" y="1" width="1" height="1"/><rect x="8" y="1" width="1" height="1"/><rect x="1" y="2" width="1" height="1"/><rect x="8" y="2" width="1" height="1"/><rect x="0" y="3" width="1" height="1"/><rect x="9" y="3" width="1" height="1"/><rect x="0" y="4" width="1" height="1"/><rect x="9" y="4" width="1" height="1"/><rect x="0" y="5" width="1" height="1"/><rect x="9" y="5" width="1" height="1"/><rect x="0" y="6" width="1" height="1"/><rect x="9" y="6" width="1" height="1"/><rect x="1" y="7" width="1" height="1"/><rect x="8" y="7" width="1" height="1"/><rect x="1" y="8" width="1" height="1"/><rect x="2" y="8" width="1" height="1"/><rect x="7" y="8" width="1" height="1"/><rect x="8" y="8" width="1" height="1"/><rect x="3" y="9" width="1" height="1"/><rect x="4" y="9" width="1" height="1"/><rect x="5" y="9" width="1" height="1"/><rect x="6" y="9" width="1" height="1"/></svg>
<div class="r" style="left:783px;top:238px;width:26px;height:18px;background:#00ff00;"></div>
<svg class="r" style="left:787px;top:243px;" width="10" height="10" viewBox="0 0 10 10" shape-rendering="crispEdges" fill="#000"><path d="M3 0h4v1h2v2h1v4h-1v2h-2v1h-4v-1h-2v-2h-1v-4h1v-2h2z" fill="#fff"/><rect x="3" y="0" width="1" height="1"/><rect x="4" y="0" width="1" height="1"/><rect x="5" y="0" width="1" height="1"/><rect x="6" y="0" width="1" height="1"/><rect x="1" y="1" width="1" height="1"/><rect x="2" y="1" width="1" height="1"/><rect x="7" y="1" width="1" height="1"/><rect x="8" y="1" width="1" height="1"/><rect x="1" y="2" width="1" height="1"/><rect x="8" y="2" width="1" height="1"/><rect x="0" y="3" width="1" height="1"/><rect x="9" y="3" width="1" height="1"/><rect x="0" y="4" width="1" height="1"/><rect x="9" y="4" width="1" height="1"/><rect x="0" y="5" width="1" height="1"/><rect x="9" y="5" width="1" height="1"/><rect x="0" y="6" width="1" height="1"/><rect x="9" y="6" width="1" height="1"/><rect x="1" y="7" width="1" height="1"/><rect x="8" y="7" width="1" height="1"/><rect x="1" y="8" width="1" height="1"/><rect x="2" y="8" width="1" height="1"/><rect x="7" y="8" width="1" height="1"/><rect x="8" y="8" width="1" height="1"/><rect x="3" y="9" width="1" height="1"/><rect x="4" y="9" width="1" height="1"/><rect x="5" y="9" width="1" height="1"/><rect x="6" y="9" width="1" height="1"/></svg>
<div class="r" style="left:853px;top:238px;width:26px;height:18px;background:#00ff00;"></div>
<svg class="r" style="left:857px;top:243px;" width="10" height="10" viewBox="0 0 10 10" shape-rendering="crispEdges" fill="#000"><path d="M3 0h4v1h2v2h1v4h-1v2h-2v1h-4v-1h-2v-2h-1v-4h1v-2h2z" fill="#fff"/><rect x="3" y="0" width="1" height="1"/><rect x="4" y="0" width="1" height="1"/><rect x="5" y="0" width="1" height="1"/><rect x="6" y="0" width="1" height="1"/><rect x="1" y="1" width="1" height="1"/><rect x="2" y="1" width="1" height="1"/><rect x="7" y="1" width="1" height="1"/><rect x="8" y="1" width="1" height="1"/><rect x="1" y="2" width="1" height="1"/><rect x="8" y="2" width="1" height="1"/><rect x="0" y="3" width="1" height="1"/><rect x="9" y="3" width="1" height="1"/><rect x="0" y="4" width="1" height="1"/><rect x="9" y="4" width="1" height="1"/><rect x="0" y="5" width="1" height="1"/><rect x="9" y="5" width="1" height="1"/><rect x="0" y="6" width="1" height="1"/><rect x="9" y="6" width="1" height="1"/><rect x="1" y="7" width="1" height="1"/><rect x="8" y="7" width="1" height="1"/><rect x="1" y="8" width="1" height="1"/><rect x="2" y="8" width="1" height="1"/><rect x="7" y="8" width="1" height="1"/><rect x="8" y="8" width="1" height="1"/><rect x="3" y="9" width="1" height="1"/><rect x="4" y="9" width="1" height="1"/><rect x="5" y="9" width="1" height="1"/><rect x="6" y="9" width="1" height="1"/></svg>
<div class="r" style="left:7px;top:260px;width:79px;height:23px;background:#fff;"></div>
<div class="t " style="left:7.7px;top:260.5px;width:77px;height:11px;line-height:11px;text-align:center;">Дата</div>
<div class="t " style="left:7.7px;top:271.8px;width:77px;height:11px;line-height:11px;text-align:center;">Документа</div>
<div class="r" style="left:85px;top:260px;width:69px;height:23px;background:#fff;"></div>
<div class="t " style="left:85.7px;top:260.5px;width:67px;height:11px;line-height:11px;text-align:center;">Сумма</div>
<div class="t " style="left:85.7px;top:271.8px;width:67px;height:11px;line-height:11px;text-align:center;">Документа</div>
<div class="r" style="left:153px;top:260px;width:77px;height:23px;background:#fff;"></div>
<div class="t " style="left:153.7px;top:265.5px;width:75px;height:11px;line-height:11px;text-align:center;">Плательщик</div>
<div class="r" style="left:229px;top:260px;width:65px;height:23px;background:#fff;"></div>
<div class="t " style="left:229.7px;top:265.5px;width:63px;height:11px;line-height:11px;text-align:center;">Группа</div>
<div class="r" style="left:293px;top:260px;width:55px;height:23px;background:#fff;"></div>
<div class="t " style="left:293.7px;top:260.5px;width:53px;height:11px;line-height:11px;text-align:center;">Дебиторс</div>
<div class="t " style="left:293.7px;top:271.8px;width:53px;height:11px;line-height:11px;text-align:center;">кая</div>
<div class="r" style="left:347px;top:260px;width:56px;height:23px;background:#fff;"></div>
<div class="t " style="left:347.7px;top:260.5px;width:54px;height:11px;line-height:11px;text-align:center;">Отсрочка</div>
<div class="t " style="left:347.7px;top:271.8px;width:54px;height:11px;line-height:11px;text-align:center;">дней</div>
<div class="r" style="left:402px;top:260px;width:55px;height:23px;background:#fff;"></div>
<div class="t " style="left:402.7px;top:260.5px;width:53px;height:11px;line-height:11px;text-align:center;">Месяц</div>
<div class="t " style="left:402.7px;top:271.8px;width:53px;height:11px;line-height:11px;text-align:center;">оплаты</div>
<div class="r" style="left:456px;top:260px;width:73px;height:23px;background:#fff;"></div>
<div class="t " style="left:456.7px;top:265.5px;width:71px;height:11px;line-height:11px;text-align:center;">Дата оплаты</div>
<div class="r" style="left:528px;top:260px;width:46px;height:23px;background:#fff;"></div>
<div class="t " style="left:528.7px;top:260.5px;width:44px;height:11px;line-height:11px;text-align:center;">Дней до</div>
<div class="t " style="left:528.7px;top:271.8px;width:44px;height:11px;line-height:11px;text-align:center;">оплаты</div>
<div class="r" style="left:573px;top:260px;width:67px;height:23px;background:#fff;"></div>
<div class="t " style="left:573.7px;top:265.5px;width:65px;height:11px;line-height:11px;text-align:center;">Оплачено</div>
<div class="r" style="left:639px;top:260px;width:70px;height:23px;background:#fff;"></div>
<div class="t " style="left:639.7px;top:265.5px;width:68px;height:11px;line-height:11px;text-align:center;">К оплате</div>
<div class="r" style="left:708px;top:260px;width:74px;height:23px;background:#ffff99;"></div>
<div class="t " style="left:708.7px;top:265.5px;width:72px;height:11px;line-height:11px;text-align:center;">Дата 1</div>
<div class="r" style="left:781px;top:260px;width:71px;height:23px;background:#ffff99;"></div>
<div class="t " style="left:781.7px;top:265.5px;width:69px;height:11px;line-height:11px;text-align:center;">Сумма 1</div>
<div class="r" style="left:851px;top:260px;width:72px;height:23px;background:#fff;"></div>
<div class="t " style="left:851.7px;top:265.5px;width:70px;height:11px;line-height:11px;text-align:center;">Дата 2</div>
<div class="r" style="left:7px;top:282px;width:913px;height:12px;background:#fff;"></div>
<div class="t " style="left:10px;top:281.5px;width:300px;height:11px;line-height:11px;">Для включения фильта снять защиту листа</div>
<div class="fb" style="left:218px;top:282px;width:11px;"><i style="left:2.6px"></i></div>
<div class="fb" style="left:282px;top:282px;width:11px;"><i style="left:2.6px"></i></div>
<div class="fb" style="left:336px;top:282px;width:11px;"><i style="left:2.6px"></i></div>
<div class="fb" style="left:391px;top:282px;width:11px;"><i style="left:2.6px"></i></div>
<div class="fb" style="left:445px;top:282px;width:11px;"><i style="left:2.6px"></i></div>
<div class="r" style="left:7px;top:293px;width:79px;height:12px;background:#ccffff;"></div>
<div class="r" style="left:85px;top:293px;width:69px;height:12px;background:#ccffff;"></div>
<div class="r" style="left:153px;top:293px;width:77px;height:12px;background:#ccffff;"></div>
<div class="r" style="left:229px;top:293px;width:65px;height:12px;background:#ccffff;"></div>
<div class="r" style="left:293px;top:293px;width:55px;height:12px;background:#ccffff;"></div>
<div class="r" style="left:347px;top:293px;width:56px;height:12px;background:#ccffff;"></div>
<div class="r" style="left:402px;top:293px;width:55px;height:12px;background:#fff;"></div>
<div class="r" style="left:456px;top:293px;width:73px;height:12px;background:#fff;"></div>
<div class="r" style="left:528px;top:293px;width:46px;height:12px;background:#fff;"></div>
<div class="r" style="left:573px;top:293px;width:67px;height:12px;background:#fff;"></div>
<div class="r" style="left:639px;top:293px;width:70px;height:12px;background:#ff0000;"></div>
<div class="r" style="left:708px;top:293px;width:74px;height:12px;background:#ccffff;"></div>
<div class="r" style="left:781px;top:293px;width:71px;height:12px;background:#ccffff;"></div>
<div class="r" style="left:851px;top:293px;width:72px;height:12px;background:#ccffff;"></div>
<div class="r" style="left:7px;top:304px;width:79px;height:12px;background:#ccffff;"></div>
<div class="r" style="left:85px;top:304px;width:69px;height:12px;background:#ccffff;"></div>
<div class="r" style="left:153px;top:304px;width:77px;height:12px;background:#ccffff;"></div>
<div class="r" style="left:229px;top:304px;width:65px;height:12px;background:#ccffff;"></div>
<div class="r" style="left:293px;top:304px;width:55px;height:12px;background:#ccffff;"></div>
<div class="r" style="left:347px;top:304px;width:56px;height:12px;background:#ccffff;"></div>
<div class="r" style="left:402px;top:304px;width:55px;height:12px;background:#ffff00;"></div>
<div class="r" style="left:456px;top:304px;width:73px;height:12px;background:#fff;"></div>
<div class="r" style="left:528px;top:304px;width:46px;height:12px;background:#fff;"></div>
<div class="r" style="left:573px;top:304px;width:67px;height:12px;background:#fff;"></div>
<div class="r" style="left:639px;top:304px;width:70px;height:12px;background:#ff0000;"></div>
<div class="r" style="left:708px;top:304px;width:74px;height:12px;background:#ccffff;"></div>
<div class="r" style="left:781px;top:304px;width:71px;height:12px;background:#ccffff;"></div>
<div class="r" style="left:851px;top:304px;width:72px;height:12px;background:#ccffff;"></div>
<div class="r" style="left:7px;top:315px;width:79px;height:12px;background:#ccffff;"></div>
<div class="r" style="left:85px;top:315px;width:69px;height:12px;background:#ccffff;"></div>
<div class="r" style="left:153px;top:315px;width:77px;height:12px;background:#ccffff;"></div>
<div class="r" style="left:229px;top:315px;width:65px;height:12px;background:#ccffff;"></div>
<div class="r" style="left:293px;top:315px;width:55px;height:12px;background:#ccffff;"></div>
<div class="r" style="left:347px;top:315px;width:56px;height:12px;background:#ccffff;"></div>
<div class="r" style="left:402px;top:315px;width:55px;height:12px;background:#ffff00;"></div>
<div class="r" style="left:456px;top:315px;width:73px;height:12px;background:#fff;"></div>
<div class="r" style="left:528px;top:315px;width:46px;height:12px;background:#fff;"></div>
<div class="r" style="left:573px;top:315px;width:67px;height:12px;background:#fff;"></div>
<div class="r" style="left:639px;top:315px;width:70px;height:12px;background:#ff0000;"></div>
<div class="r" style="left:708px;top:315px;width:74px;height:12px;background:#ccffff;"></div>
<div class="r" style="left:781px;top:315px;width:71px;height:12px;background:#ccffff;"></div>
<div class="r" style="left:851px;top:315px;width:72px;height:12px;background:#ccffff;"></div>
<div class="r" style="left:7px;top:326px;width:79px;height:12px;background:#ccffff;"></div>
<div class="r" style="left:85px;top:326px;width:69px;height:12px;background:#ccffff;"></div>
<div class="r" style="left:153px;top:326px;width:77px;height:12px;background:#ccffff;"></div>
<div class="r" style="left:229px;top:326px;width:65px;height:12px;background:#ccffff;"></div>
<div class="r" style="left:293px;top:326px;width:55px;height:12px;background:#ccffff;"></div>
<div class="r" style="left:347px;top:326px;width:56px;height:12px;background:#ccffff;"></div>
<div class="r" style="left:402px;top:326px;width:55px;height:12px;background:#ffff00;"></div>
<div class="r" style="left:456px;top:326px;width:73px;height:12px;background:#fff;"></div>
<div class="r" style="left:528px;top:326px;width:46px;height:12px;background:#fff;"></div>
<div class="r" style="left:573px;top:326px;width:67px;height:12px;background:#fff;"></div>
<div class="r" style="left:639px;top:326px;width:70px;height:12px;background:#ff0000;"></div>
<div class="r" style="left:708px;top:326px;width:74px;height:12px;background:#ccffff;"></div>
<div class="r" style="left:781px;top:326px;width:71px;height:12px;background:#ccffff;"></div>
<div class="r" style="left:851px;top:326px;width:72px;height:12px;background:#ccffff;"></div>
<div class="r" style="left:7px;top:337px;width:79px;height:12px;background:#ccffff;"></div>
<div class="r" style="left:85px;top:337px;width:69px;height:12px;background:#ccffff;"></div>
<div class="r" style="left:153px;top:337px;width:77px;height:12px;background:#ccffff;"></div>
<div class="r" style="left:229px;top:337px;width:65px;height:12px;background:#ccffff;"></div>
<div class="r" style="left:293px;top:337px;width:55px;height:12px;background:#ccffff;"></div>
<div class="r" style="left:347px;top:337px;width:56px;height:12px;background:#ccffff;"></div>
<div class="r" style="left:402px;top:337px;width:55px;height:12px;background:#ffff00;"></div>
<div class="r" style="left:456px;top:337px;width:73px;height:12px;background:#fff;"></div>
<div class="r" style="left:528px;top:337px;width:46px;height:12px;background:#fff;"></div>
<div class="r" style="left:573px;top:337px;width:67px;height:12px;background:#fff;"></div>
<div class="r" style="left:639px;top:337px;width:70px;height:12px;background:#ff0000;"></div>
<div class="r" style="left:708px;top:337px;width:74px;height:12px;background:#ccffff;"></div>
<div class="r" style="left:781px;top:337px;width:71px;height:12px;background:#ccffff;"></div>
<div class="r" style="left:851px;top:337px;width:72px;height:12px;background:#ccffff;"></div>
<div class="r" style="left:7px;top:348px;width:79px;height:12px;background:#ccffff;"></div>
<div class="r" style="left:85px;top:348px;width:69px;height:12px;background:#ccffff;"></div>
<div class="r" style="left:153px;top:348px;width:77px;height:12px;background:#ccffff;"></div>
<div class="r" style="left:229px;top:348px;width:65px;height:12px;background:#ccffff;"></div>
<div class="r" style="left:293px;top:348px;width:55px;height:12px;background:#ccffff;"></div>
<div class="r" style="left:347px;top:348px;width:56px;height:12px;background:#ccffff;"></div>
<div class="r" style="left:402px;top:348px;width:55px;height:12px;background:#ffff00;"></div>
<div class="r" style="left:456px;top:348px;width:73px;height:12px;background:#fff;"></div>
<div class="r" style="left:528px;top:348px;width:46px;height:12px;background:#fff;"></div>
<div class="r" style="left:573px;top:348px;width:67px;height:12px;background:#fff;"></div>
<div class="r" style="left:639px;top:348px;width:70px;height:12px;background:#00ff00;"></div>
<div class="r" style="left:708px;top:348px;width:74px;height:12px;background:#ccffff;"></div>
<div class="r" style="left:781px;top:348px;width:71px;height:12px;background:#ccffff;"></div>
<div class="r" style="left:851px;top:348px;width:72px;height:12px;background:#ccffff;"></div>
<div class="r" style="left:7px;top:359px;width:79px;height:12px;background:#ccffff;"></div>
<div class="r" style="left:85px;top:359px;width:69px;height:12px;background:#ccffff;"></div>
<div class="r" style="left:153px;top:359px;width:77px;height:12px;background:#ccffff;"></div>
<div class="r" style="left:229px;top:359px;width:65px;height:12px;background:#ccffff;"></div>
<div class="r" style="left:293px;top:359px;width:55px;height:12px;background:#ccffff;"></div>
<div class="r" style="left:347px;top:359px;width:56px;height:12px;background:#ccffff;"></div>
<div class="r" style="left:402px;top:359px;width:55px;height:12px;background:#fff;"></div>
<div class="r" style="left:456px;top:359px;width:73px;height:12px;background:#fff;"></div>
<div class="r" style="left:528px;top:359px;width:46px;height:12px;background:#fff;"></div>
<div class="r" style="left:573px;top:359px;width:67px;height:12px;background:#fff;"></div>
<div class="r" style="left:639px;top:359px;width:70px;height:12px;background:#00ff00;"></div>
<div class="r" style="left:708px;top:359px;width:74px;height:12px;background:#ccffff;"></div>
<div class="r" style="left:781px;top:359px;width:71px;height:12px;background:#ccffff;"></div>
<div class="r" style="left:851px;top:359px;width:72px;height:12px;background:#ccffff;"></div>
<div class="r" style="left:7px;top:370px;width:79px;height:12px;background:#ccffff;"></div>
<div class="r" style="left:85px;top:370px;width:69px;height:12px;background:#ccffff;"></div>
<div class="r" style="left:153px;top:370px;width:77px;height:12px;background:#ccffff;"></div>
<div class="r" style="left:229px;top:370px;width:65px;height:12px;background:#ccffff;"></div>
<div class="r" style="left:293px;top:370px;width:55px;height:12px;background:#ccffff;"></div>
<div class="r" style="left:347px;top:370px;width:56px;height:12px;background:#ccffff;"></div>
<div class="r" style="left:402px;top:370px;width:55px;height:12px;background:#fff;"></div>
<div class="r" style="left:456px;top:370px;width:73px;height:12px;background:#fff;"></div>
<div class="r" style="left:528px;top:370px;width:46px;height:12px;background:#fff;"></div>
<div class="r" style="left:573px;top:370px;width:67px;height:12px;background:#fff;"></div>
<div class="r" style="left:639px;top:370px;width:70px;height:12px;background:#fff;"></div>
<div class="r" style="left:708px;top:370px;width:74px;height:12px;background:#ccffff;"></div>
<div class="r" style="left:781px;top:370px;width:71px;height:12px;background:#ccffff;"></div>
<div class="r" style="left:851px;top:370px;width:72px;height:12px;background:#ccffff;"></div>
<div class="r" style="left:7px;top:381px;width:79px;height:12px;background:#ccffff;"></div>
<div class="r" style="left:85px;top:381px;width:69px;height:12px;background:#ccffff;"></div>
<div class="r" style="left:153px;top:381px;width:77px;height:12px;background:#ccffff;"></div>
<div class="r" style="left:229px;top:381px;width:65px;height:12px;background:#ccffff;"></div>
<div class="r" style="left:293px;top:381px;width:55px;height:12px;background:#ccffff;"></div>
<div class="r" style="left:347px;top:381px;width:56px;height:12px;background:#ccffff;"></div>
<div class="r" style="left:402px;top:381px;width:55px;height:12px;background:#fff;"></div>
<div class="r" style="left:456px;top:381px;width:73px;height:12px;background:#fff;"></div>
<div class="r" style="left:528px;top:381px;width:46px;height:12px;background:#fff;"></div>
<div class="r" style="left:573px;top:381px;width:67px;height:12px;background:#fff;"></div>
<div class="r" style="left:639px;top:381px;width:70px;height:12px;background:#fff;"></div>
<div class="r" style="left:708px;top:381px;width:74px;height:12px;background:#ccffff;"></div>
<div class="r" style="left:781px;top:381px;width:71px;height:12px;background:#ccffff;"></div>
<div class="r" style="left:851px;top:381px;width:72px;height:12px;background:#ccffff;"></div>
<div class="r" style="left:7px;top:392px;width:79px;height:12px;background:#ccffff;"></div>
<div class="r" style="left:85px;top:392px;width:69px;height:12px;background:#ccffff;"></div>
<div class="r" style="left:153px;top:392px;width:77px;height:12px;background:#ccffff;"></div>
<div class="r" style="left:229px;top:392px;width:65px;height:12px;background:#ccffff;"></div>
<div class="r" style="left:293px;top:392px;width:55px;height:12px;background:#ccffff;"></div>
<div class="r" style="left:347px;top:392px;width:56px;height:12px;background:#ccffff;"></div>
<div class="r" style="left:402px;top:392px;width:55px;height:12px;background:#fff;"></div>
<div class="r" style="left:456px;top:392px;width:73px;height:12px;background:#fff;"></div>
<div class="r" style="left:528px;top:392px;width:46px;height:12px;background:#fff;"></div>
<div class="r" style="left:573px;top:392px;width:67px;height:12px;background:#fff;"></div>
<div class="r" style="left:639px;top:392px;width:70px;height:12px;background:#fff;"></div>
<div class="r" style="left:708px;top:392px;width:74px;height:12px;background:#ccffff;"></div>
<div class="r" style="left:781px;top:392px;width:71px;height:12px;background:#ccffff;"></div>
<div class="r" style="left:851px;top:392px;width:72px;height:12px;background:#ccffff;"></div>
<div class="r" style="left:7px;top:403px;width:79px;height:12px;background:#ccffff;"></div>
<div class="r" style="left:85px;top:403px;width:69px;height:12px;background:#ccffff;"></div>
<div class="r" style="left:153px;top:403px;width:77px;height:12px;background:#ccffff;"></div>
<div class="r" style="left:229px;top:403px;width:65px;height:12px;background:#ccffff;"></div>
<div class="r" style="left:293px;top:403px;width:55px;height:12px;background:#ccffff;"></div>
<div class="r" style="left:347px;top:403px;width:56px;height:12px;background:#ccffff;"></div>
<div class="r" style="left:402px;top:403px;width:55px;height:12px;background:#fff;"></div>
<div class="r" style="left:456px;top:403px;width:73px;height:12px;background:#fff;"></div>
<div class="r" style="left:528px;top:403px;width:46px;height:12px;background:#fff;"></div>
<div class="r" style="left:573px;top:403px;width:67px;height:12px;background:#fff;"></div>
<div class="r" style="left:639px;top:403px;width:70px;height:12px;background:#fff;"></div>
<div class="r" style="left:708px;top:403px;width:74px;height:12px;background:#ccffff;"></div>
<div class="r" style="left:781px;top:403px;width:71px;height:12px;background:#ccffff;"></div>
<div class="r" style="left:851px;top:403px;width:72px;height:12px;background:#ccffff;"></div>
<div class="r" style="left:7px;top:414px;width:79px;height:12px;background:#ccffff;"></div>
<div class="r" style="left:85px;top:414px;width:69px;height:12px;background:#ccffff;"></div>
<div class="r" style="left:153px;top:414px;width:77px;height:12px;background:#ccffff;"></div>
<div class="r" style="left:229px;top:414px;width:65px;height:12px;background:#ccffff;"></div>
<div class="r" style="left:293px;top:414px;width:55px;height:12px;background:#ccffff;"></div>
<div class="r" style="left:347px;top:414px;width:56px;height:12px;background:#ccffff;"></div>
<div class="r" style="left:402px;top:414px;width:55px;height:12px;background:#fff;"></div>
<div class="r" style="left:456px;top:414px;width:73px;height:12px;background:#fff;"></div>
<div class="r" style="left:528px;top:414px;width:46px;height:12px;background:#fff;"></div>
<div class="r" style="left:573px;top:414px;width:67px;height:12px;background:#fff;"></div>
<div class="r" style="left:639px;top:414px;width:70px;height:12px;background:#fff;"></div>
<div class="r" style="left:708px;top:414px;width:74px;height:12px;background:#ccffff;"></div>
<div class="r" style="left:781px;top:414px;width:71px;height:12px;background:#ccffff;"></div>
<div class="r" style="left:851px;top:414px;width:72px;height:12px;background:#ccffff;"></div>
<div class="r" style="left:7px;top:425px;width:79px;height:12px;background:#ccffff;"></div>
<div class="r" style="left:85px;top:425px;width:69px;height:12px;background:#ccffff;"></div>
<div class="r" style="left:153px;top:425px;width:77px;height:12px;background:#ccffff;"></div>
<div class="r" style="left:229px;top:425px;width:65px;height:12px;background:#ccffff;"></div>
<div class="r" style="left:293px;top:425px;width:55px;height:12px;background:#ccffff;"></div>
<div class="r" style="left:347px;top:425px;width:56px;height:12px;background:#ccffff;"></div>
<div class="r" style="left:402px;top:425px;width:55px;height:12px;background:#fff;"></div>
<div class="r" style="left:456px;top:425px;width:73px;height:12px;background:#fff;"></div>
<div class="r" style="left:528px;top:425px;width:46px;height:12px;background:#fff;"></div>
<div class="r" style="left:573px;top:425px;width:67px;height:12px;background:#fff;"></div>
<div class="r" style="left:639px;top:425px;width:70px;height:12px;background:#fff;"></div>
<div class="r" style="left:708px;top:425px;width:74px;height:12px;background:#ccffff;"></div>
<div class="r" style="left:781px;top:425px;width:71px;height:12px;background:#ccffff;"></div>
<div class="r" style="left:851px;top:425px;width:72px;height:12px;background:#ccffff;"></div>
<div class="r" style="left:7px;top:436px;width:79px;height:12px;background:#ccffff;"></div>
<div class="r" style="left:85px;top:436px;width:69px;height:12px;background:#ccffff;"></div>
<div class="r" style="left:153px;top:436px;width:77px;height:12px;background:#ccffff;"></div>
<div class="r" style="left:229px;top:436px;width:65px;height:12px;background:#ccffff;"></div>
<div class="r" style="left:293px;top:436px;width:55px;height:12px;background:#ccffff;"></div>
<div class="r" style="left:347px;top:436px;width:56px;height:12px;background:#ccffff;"></div>
<div class="r" style="left:402px;top:436px;width:55px;height:12px;background:#ffff00;"></div>
<div class="r" style="left:456px;top:436px;width:73px;height:12px;background:#fff;"></div>
<div class="r" style="left:528px;top:436px;width:46px;height:12px;background:#fff;"></div>
<div class="r" style="left:573px;top:436px;width:67px;height:12px;background:#fff;"></div>
<div class="r" style="left:639px;top:436px;width:70px;height:12px;background:#fff;"></div>
<div class="r" style="left:708px;top:436px;width:74px;height:12px;background:#ccffff;"></div>
<div class="r" style="left:781px;top:436px;width:71px;height:12px;background:#ccffff;"></div>
<div class="r" style="left:851px;top:436px;width:72px;height:12px;background:#ccffff;"></div>
<div class="r" style="left:7px;top:447px;width:79px;height:12px;background:#ccffff;"></div>
<div class="r" style="left:85px;top:447px;width:69px;height:12px;background:#ccffff;"></div>
<div class="r" style="left:153px;top:447px;width:77px;height:12px;background:#ccffff;"></div>
<div class="r" style="left:229px;top:447px;width:65px;height:12px;background:#ccffff;"></div>
<div class="r" style="left:293px;top:447px;width:55px;height:12px;background:#ccffff;"></div>
<div class="r" style="left:347px;top:447px;width:56px;height:12px;background:#ccffff;"></div>
<div class="r" style="left:402px;top:447px;width:55px;height:12px;background:#ffff00;"></div>
<div class="r" style="left:456px;top:447px;width:73px;height:12px;background:#fff;"></div>
<div class="r" style="left:528px;top:447px;width:46px;height:12px;background:#fff;"></div>
<div class="r" style="left:573px;top:447px;width:67px;height:12px;background:#fff;"></div>
<div class="r" style="left:639px;top:447px;width:70px;height:12px;background:#fff;"></div>
<div class="r" style="left:708px;top:447px;width:74px;height:12px;background:#ccffff;"></div>
<div class="r" style="left:781px;top:447px;width:71px;height:12px;background:#ccffff;"></div>
<div class="r" style="left:851px;top:447px;width:72px;height:12px;background:#ccffff;"></div>
<div class="r" style="left:7px;top:458px;width:79px;height:12px;background:#ccffff;"></div>
<div class="r" style="left:85px;top:458px;width:69px;height:12px;background:#ccffff;"></div>
<div class="r" style="left:153px;top:458px;width:77px;height:12px;background:#ccffff;"></div>
<div class="r" style="left:229px;top:458px;width:65px;height:12px;background:#ccffff;"></div>
<div class="r" style="left:293px;top:458px;width:55px;height:12px;background:#ccffff;"></div>
<div class="r" style="left:347px;top:458px;width:56px;height:12px;background:#ccffff;"></div>
<div class="r" style="left:402px;top:458px;width:55px;height:12px;background:#ffff00;"></div>
<div class="r" style="left:456px;top:458px;width:73px;height:12px;background:#fff;"></div>
<div class="r" style="left:528px;top:458px;width:46px;height:12px;background:#fff;"></div>
<div class="r" style="left:573px;top:458px;width:67px;height:12px;background:#fff;"></div>
<div class="r" style="left:639px;top:458px;width:70px;height:12px;background:#fff;"></div>
<div class="r" style="left:708px;top:458px;width:74px;height:12px;background:#ccffff;"></div>
<div class="r" style="left:781px;top:458px;width:71px;height:12px;background:#ccffff;"></div>
<div class="r" style="left:851px;top:458px;width:72px;height:12px;background:#ccffff;"></div>
<div class="r" style="left:7px;top:469px;width:79px;height:12px;background:#ccffff;"></div>
<div class="r" style="left:85px;top:469px;width:69px;height:12px;background:#ccffff;"></div>
<div class="r" style="left:153px;top:469px;width:77px;height:12px;background:#ccffff;"></div>
<div class="r" style="left:229px;top:469px;width:65px;height:12px;background:#ccffff;"></div>
<div class="r" style="left:293px;top:469px;width:55px;height:12px;background:#ccffff;"></div>
<div class="r" style="left:347px;top:469px;width:56px;height:12px;background:#ccffff;"></div>
<div class="r" style="left:402px;top:469px;width:55px;height:12px;background:#ffff00;"></div>
<div class="r" style="left:456px;top:469px;width:73px;height:12px;background:#fff;"></div>
<div class="r" style="left:528px;top:469px;width:46px;height:12px;background:#fff;"></div>
<div class="r" style="left:573px;top:469px;width:67px;height:12px;background:#fff;"></div>
<div class="r" style="left:639px;top:469px;width:70px;height:12px;background:#fff;"></div>
<div class="r" style="left:708px;top:469px;width:74px;height:12px;background:#ccffff;"></div>
<div class="r" style="left:781px;top:469px;width:71px;height:12px;background:#ccffff;"></div>
<div class="r" style="left:851px;top:469px;width:72px;height:12px;background:#ccffff;"></div>
<div class="r" style="left:7px;top:480px;width:79px;height:12px;background:#ccffff;"></div>
<div class="r" style="left:85px;top:480px;width:69px;height:12px;background:#ccffff;"></div>
<div class="r" style="left:153px;top:480px;width:77px;height:12px;background:#ccffff;"></div>
<div class="r" style="left:229px;top:480px;width:65px;height:12px;background:#ccffff;"></div>
<div class="r" style="left:293px;top:480px;width:55px;height:12px;background:#ccffff;"></div>
<div class="r" style="left:347px;top:480px;width:56px;height:12px;background:#ccffff;"></div>
<div class="r" style="left:402px;top:480px;width:55px;height:12px;background:#ffff00;"></div>
<div class="r" style="left:456px;top:480px;width:73px;height:12px;background:#fff;"></div>
<div class="r" style="left:528px;top:480px;width:46px;height:12px;background:#fff;"></div>
<div class="r" style="left:573px;top:480px;width:67px;height:12px;background:#fff;"></div>
<div class="r" style="left:639px;top:480px;width:70px;height:12px;background:#fff;"></div>
<div class="r" style="left:708px;top:480px;width:74px;height:12px;background:#ccffff;"></div>
<div class="r" style="left:781px;top:480px;width:71px;height:12px;background:#ccffff;"></div>
<div class="r" style="left:851px;top:480px;width:72px;height:12px;background:#ccffff;"></div>
<div class="r" style="left:7px;top:491px;width:79px;height:12px;background:#ccffff;"></div>
<div class="r" style="left:85px;top:491px;width:69px;height:12px;background:#ccffff;"></div>
<div class="r" style="left:153px;top:491px;width:77px;height:12px;background:#ccffff;"></div>
<div class="r" style="left:229px;top:491px;width:65px;height:12px;background:#ccffff;"></div>
<div class="r" style="left:293px;top:491px;width:55px;height:12px;background:#ccffff;"></div>
<div class="r" style="left:347px;top:491px;width:56px;height:12px;background:#ccffff;"></div>
<div class="r" style="left:402px;top:491px;width:55px;height:12px;background:#ffff00;"></div>
<div class="r" style="left:456px;top:491px;width:73px;height:12px;background:#fff;"></div>
<div class="r" style="left:528px;top:491px;width:46px;height:12px;background:#fff;"></div>
<div class="r" style="left:573px;top:491px;width:67px;height:12px;background:#fff;"></div>
<div class="r" style="left:639px;top:491px;width:70px;height:12px;background:#fff;"></div>
<div class="r" style="left:708px;top:491px;width:74px;height:12px;background:#ccffff;"></div>
<div class="r" style="left:781px;top:491px;width:71px;height:12px;background:#ccffff;"></div>
<div class="r" style="left:851px;top:491px;width:72px;height:12px;background:#ccffff;"></div>
<div class="r" style="left:7px;top:502px;width:79px;height:12px;background:#ccffff;"></div>
<div class="r" style="left:85px;top:502px;width:69px;height:12px;background:#ccffff;"></div>
<div class="r" style="left:153px;top:502px;width:77px;height:12px;background:#ccffff;"></div>
<div class="r" style="left:229px;top:502px;width:65px;height:12px;background:#ccffff;"></div>
<div class="r" style="left:293px;top:502px;width:55px;height:12px;background:#ccffff;"></div>
<div class="r" style="left:347px;top:502px;width:56px;height:12px;background:#ccffff;"></div>
<div class="r" style="left:402px;top:502px;width:55px;height:12px;background:#fff;"></div>
<div class="r" style="left:456px;top:502px;width:73px;height:12px;background:#fff;"></div>
<div class="r" style="left:528px;top:502px;width:46px;height:12px;background:#fff;"></div>
<div class="r" style="left:573px;top:502px;width:67px;height:12px;background:#fff;"></div>
<div class="r" style="left:639px;top:502px;width:70px;height:12px;background:#fff;"></div>
<div class="r" style="left:708px;top:502px;width:74px;height:12px;background:#ccffff;"></div>
<div class="r" style="left:781px;top:502px;width:71px;height:12px;background:#ccffff;"></div>
<div class="r" style="left:851px;top:502px;width:72px;height:12px;background:#ccffff;"></div>
<div class="r" style="left:7px;top:513px;width:79px;height:12px;background:#ccffff;"></div>
<div class="r" style="left:85px;top:513px;width:69px;height:12px;background:#ccffff;"></div>
<div class="r" style="left:153px;top:513px;width:77px;height:12px;background:#ccffff;"></div>
<div class="r" style="left:229px;top:513px;width:65px;height:12px;background:#ccffff;"></div>
<div class="r" style="left:293px;top:513px;width:55px;height:12px;background:#ccffff;"></div>
<div class="r" style="left:347px;top:513px;width:56px;height:12px;background:#ccffff;"></div>
<div class="r" style="left:402px;top:513px;width:55px;height:12px;background:#fff;"></div>
<div class="r" style="left:456px;top:513px;width:73px;height:12px;background:#fff;"></div>
<div class="r" style="left:528px;top:513px;width:46px;height:12px;background:#fff;"></div>
<div class="r" style="left:573px;top:513px;width:67px;height:12px;background:#fff;"></div>
<div class="r" style="left:639px;top:513px;width:70px;height:12px;background:#fff;"></div>
<div class="r" style="left:708px;top:513px;width:74px;height:12px;background:#ccffff;"></div>
<div class="r" style="left:781px;top:513px;width:71px;height:12px;background:#ccffff;"></div>
<div class="r" style="left:851px;top:513px;width:72px;height:12px;background:#ccffff;"></div>
<div class="r" style="left:7px;top:524px;width:79px;height:12px;background:#ccffff;"></div>
<div class="r" style="left:85px;top:524px;width:69px;height:12px;background:#ccffff;"></div>
<div class="r" style="left:153px;top:524px;width:77px;height:12px;background:#ccffff;"></div>
<div class="r" style="left:229px;top:524px;width:65px;height:12px;background:#ccffff;"></div>
<div class="r" style="left:293px;top:524px;width:55px;height:12px;background:#ccffff;"></div>
<div class="r" style="left:347px;top:524px;width:56px;height:12px;background:#ccffff;"></div>
<div class="r" style="left:402px;top:524px;width:55px;height:12px;background:#fff;"></div>
<div class="r" style="left:456px;top:524px;width:73px;height:12px;background:#fff;"></div>
<div class="r" style="left:528px;top:524px;width:46px;height:12px;background:#fff;"></div>
<div class="r" style="left:573px;top:524px;width:67px;height:12px;background:#fff;"></div>
<div class="r" style="left:639px;top:524px;width:70px;height:12px;background:#fff;"></div>
<div class="r" style="left:708px;top:524px;width:74px;height:12px;background:#ccffff;"></div>
<div class="r" style="left:781px;top:524px;width:71px;height:12px;background:#ccffff;"></div>
<div class="r" style="left:851px;top:524px;width:72px;height:12px;background:#ccffff;"></div>
<div class="r" style="left:7px;top:535px;width:79px;height:12px;background:#ccffff;"></div>
<div class="r" style="left:85px;top:535px;width:69px;height:12px;background:#ccffff;"></div>
<div class="r" style="left:153px;top:535px;width:77px;height:12px;background:#ccffff;"></div>
<div class="r" style="left:229px;top:535px;width:65px;height:12px;background:#ccffff;"></div>
<div class="r" style="left:293px;top:535px;width:55px;height:12px;background:#ccffff;"></div>
<div class="r" style="left:347px;top:535px;width:56px;height:12px;background:#ccffff;"></div>
<div class="r" style="left:402px;top:535px;width:55px;height:12px;background:#fff;"></div>
<div class="r" style="left:456px;top:535px;width:73px;height:12px;background:#fff;"></div>
<div class="r" style="left:528px;top:535px;width:46px;height:12px;background:#fff;"></div>
<div class="r" style="left:573px;top:535px;width:67px;height:12px;background:#fff;"></div>
<div class="r" style="left:639px;top:535px;width:70px;height:12px;background:#fff;"></div>
<div class="r" style="left:708px;top:535px;width:74px;height:12px;background:#ccffff;"></div>
<div class="r" style="left:781px;top:535px;width:71px;height:12px;background:#ccffff;"></div>
<div class="r" style="left:851px;top:535px;width:72px;height:12px;background:#ccffff;"></div>
<div class="r" style="left:7px;top:546px;width:79px;height:12px;background:#ccffff;"></div>
<div class="r" style="left:85px;top:546px;width:69px;height:12px;background:#ccffff;"></div>
<div class="r" style="left:153px;top:546px;width:77px;height:12px;background:#ccffff;"></div>
<div class="r" style="left:229px;top:546px;width:65px;height:12px;background:#ccffff;"></div>
<div class="r" style="left:293px;top:546px;width:55px;height:12px;background:#ccffff;"></div>
<div class="r" style="left:347px;top:546px;width:56px;height:12px;background:#ccffff;"></div>
<div class="r" style="left:402px;top:546px;width:55px;height:12px;background:#fff;"></div>
<div class="r" style="left:456px;top:546px;width:73px;height:12px;background:#fff;"></div>
<div class="r" style="left:528px;top:546px;width:46px;height:12px;background:#fff;"></div>
<div class="r" style="left:573px;top:546px;width:67px;height:12px;background:#fff;"></div>
<div class="r" style="left:639px;top:546px;width:70px;height:12px;background:#fff;"></div>
<div class="r" style="left:708px;top:546px;width:74px;height:12px;background:#ccffff;"></div>
<div class="r" style="left:781px;top:546px;width:71px;height:12px;background:#ccffff;"></div>
<div class="r" style="left:851px;top:546px;width:72px;height:12px;background:#ccffff;"></div>
<div class="t n d" style="left:8.6px;top:292.5px;width:77px;height:11px;line-height:11px;transform-origin:50% 50%;text-align:center;">31.08.2018</div>
<div class="t n" style="left:86px;top:292.5px;width:62.7px;height:11px;line-height:11px;transform-origin:100% 50%;text-align:right;">10 000.00</div>
<div class="t " style="left:153.7px;top:292.5px;width:75px;height:11px;line-height:11px;text-align:center;color:#000080;margin-left:0.9px;">Клиент 1</div>
<div class="t b" style="left:229.7px;top:292.5px;width:63px;height:11px;line-height:11px;text-align:center;color:#000080;margin-left:0.9px;">Прочие</div>
<div class="t " style="left:293.7px;top:292.5px;width:53px;height:11px;line-height:11px;text-align:center;">+</div>
<div class="t bn" style="left:348.6px;top:292.5px;width:54px;height:11px;line-height:11px;text-align:center;">30</div>
<div class="t " style="left:402.7px;top:292.5px;width:53px;height:11px;line-height:11px;text-align:center;margin-left:0.6px;">Сен</div>
<div class="t n d" style="left:457.6px;top:292.5px;width:71px;height:11px;line-height:11px;transform-origin:50% 50%;text-align:center;">30.09.2018</div>
<div class="t n" style="left:529.6px;top:292.5px;width:44px;height:11px;line-height:11px;transform-origin:50% 50%;text-align:center;color:#ff0000;letter-spacing:0.85px;margin-left:-1.8px;">-30</div>
<div class="t n" style="left:574px;top:292.5px;width:63.5px;height:11px;line-height:11px;transform-origin:100% 50%;text-align:right;color:#c4c4c4;">0.00</div>
<div class="t n" style="left:640px;top:292.5px;width:64.0px;height:11px;line-height:11px;transform-origin:100% 50%;text-align:right;">10 000.00</div>
<div class="t n d" style="left:8.6px;top:303.5px;width:77px;height:11px;line-height:11px;transform-origin:50% 50%;text-align:center;">05.09.2018</div>
<div class="t bn" style="left:86px;top:303.5px;width:62.7px;height:11px;line-height:11px;text-align:right;">90 000.00</div>
<div class="t " style="left:153.7px;top:303.5px;width:75px;height:11px;line-height:11px;text-align:center;color:#000080;margin-left:0.9px;">Клиент 5</div>
<div class="t " style="left:229.7px;top:303.5px;width:63px;height:11px;line-height:11px;text-align:center;color:#000080;margin-left:0.9px;letter-spacing:0.3px;">Выр Услуг</div>
<div class="t " style="left:293.7px;top:303.5px;width:53px;height:11px;line-height:11px;text-align:center;">+</div>
<div class="t bn" style="left:348.6px;top:303.5px;width:54px;height:11px;line-height:11px;text-align:center;">30</div>
<div class="t " style="left:402.7px;top:303.5px;width:53px;height:11px;line-height:11px;text-align:center;margin-left:0.6px;">Окт</div>
<div class="t n d" style="left:457.6px;top:303.5px;width:71px;height:11px;line-height:11px;transform-origin:50% 50%;text-align:center;">05.10.2018</div>
<div class="t n" style="left:529.6px;top:303.5px;width:44px;height:11px;line-height:11px;transform-origin:50% 50%;text-align:center;color:#ff0000;letter-spacing:0.85px;margin-left:-1.8px;">-25</div>
<div class="t n" style="left:574px;top:303.5px;width:63.5px;height:11px;line-height:11px;transform-origin:100% 50%;text-align:right;color:#c4c4c4;">0.00</div>
<div class="t n" style="left:640px;top:303.5px;width:64.0px;height:11px;line-height:11px;transform-origin:100% 50%;text-align:right;">90 000.00</div>
<div class="t n d" style="left:8.6px;top:314.5px;width:77px;height:11px;line-height:11px;transform-origin:50% 50%;text-align:center;">10.09.2018</div>
<div class="t n" style="left:86px;top:314.5px;width:62.7px;height:11px;line-height:11px;transform-origin:100% 50%;text-align:right;">12 630.00</div>
<div class="t " style="left:153.7px;top:314.5px;width:75px;height:11px;line-height:11px;text-align:center;color:#000080;margin-left:0.9px;">Клиент 6</div>
<div class="t " style="left:229.7px;top:314.5px;width:63px;height:11px;line-height:11px;text-align:center;color:#000080;margin-left:0.9px;">Выручка</div>
<div class="t " style="left:293.7px;top:314.5px;width:53px;height:11px;line-height:11px;text-align:center;">+</div>
<div class="t bn" style="left:348.6px;top:314.5px;width:54px;height:11px;line-height:11px;text-align:center;">33</div>
<div class="t " style="left:402.7px;top:314.5px;width:53px;height:11px;line-height:11px;text-align:center;margin-left:0.6px;">Окт</div>
<div class="t n d" style="left:457.6px;top:314.5px;width:71px;height:11px;line-height:11px;transform-origin:50% 50%;text-align:center;">13.10.2018</div>
<div class="t n" style="left:529.6px;top:314.5px;width:44px;height:11px;line-height:11px;transform-origin:50% 50%;text-align:center;color:#ff0000;letter-spacing:0.85px;margin-left:-1.8px;">-17</div>
<div class="t n" style="left:574px;top:314.5px;width:63.5px;height:11px;line-height:11px;transform-origin:100% 50%;text-align:right;color:#c4c4c4;">0.00</div>
<div class="t n" style="left:640px;top:314.5px;width:64.0px;height:11px;line-height:11px;transform-origin:100% 50%;text-align:right;">12 630.00</div>
<div class="t n d" style="left:8.6px;top:325.5px;width:77px;height:11px;line-height:11px;transform-origin:50% 50%;text-align:center;">15.09.2018</div>
<div class="t n" style="left:86px;top:325.5px;width:62.7px;height:11px;line-height:11px;transform-origin:100% 50%;text-align:right;">12 640.00</div>
<div class="t " style="left:153.7px;top:325.5px;width:75px;height:11px;line-height:11px;text-align:center;color:#000080;margin-left:0.9px;">Клиент 5</div>
<div class="t " style="left:229.7px;top:325.5px;width:63px;height:11px;line-height:11px;text-align:center;color:#000080;margin-left:0.9px;letter-spacing:0.3px;">Выр Услуг</div>
<div class="t " style="left:293.7px;top:325.5px;width:53px;height:11px;line-height:11px;text-align:center;">+</div>
<div class="t bn" style="left:348.6px;top:325.5px;width:54px;height:11px;line-height:11px;text-align:center;">34</div>
<div class="t " style="left:402.7px;top:325.5px;width:53px;height:11px;line-height:11px;text-align:center;margin-left:0.6px;">Окт</div>
<div class="t n d" style="left:457.6px;top:325.5px;width:71px;height:11px;line-height:11px;transform-origin:50% 50%;text-align:center;">19.10.2018</div>
<div class="t n" style="left:529.6px;top:325.5px;width:44px;height:11px;line-height:11px;transform-origin:50% 50%;text-align:center;color:#ff0000;letter-spacing:0.85px;margin-left:-1.8px;">-11</div>
<div class="t n" style="left:574px;top:325.5px;width:63.5px;height:11px;line-height:11px;transform-origin:100% 50%;text-align:right;color:#c4c4c4;">0.00</div>
<div class="t n" style="left:640px;top:325.5px;width:64.0px;height:11px;line-height:11px;transform-origin:100% 50%;text-align:right;">12 640.00</div>
<div class="t n d" style="left:8.6px;top:336.5px;width:77px;height:11px;line-height:11px;transform-origin:50% 50%;text-align:center;">20.09.2018</div>
<div class="t n" style="left:86px;top:336.5px;width:62.7px;height:11px;line-height:11px;transform-origin:100% 50%;text-align:right;">12 650.00</div>
<div class="t " style="left:153.7px;top:336.5px;width:75px;height:11px;line-height:11px;text-align:center;color:#000080;margin-left:0.9px;">Клиент 1</div>
<div class="t " style="left:229.7px;top:336.5px;width:63px;height:11px;line-height:11px;text-align:center;color:#000080;margin-left:0.9px;">Выручка</div>
<div class="t " style="left:293.7px;top:336.5px;width:53px;height:11px;line-height:11px;text-align:center;">+</div>
<div class="t bn" style="left:348.6px;top:336.5px;width:54px;height:11px;line-height:11px;text-align:center;">35</div>
<div class="t " style="left:402.7px;top:336.5px;width:53px;height:11px;line-height:11px;text-align:center;margin-left:0.6px;">Окт</div>
<div class="t n d" style="left:457.6px;top:336.5px;width:71px;height:11px;line-height:11px;transform-origin:50% 50%;text-align:center;">25.10.2018</div>
<div class="t n" style="left:529.6px;top:336.5px;width:44px;height:11px;line-height:11px;transform-origin:50% 50%;text-align:center;color:#ff0000;letter-spacing:0.85px;margin-left:-1.8px;">-5</div>
<div class="t n" style="left:574px;top:336.5px;width:63.5px;height:11px;line-height:11px;transform-origin:100% 50%;text-align:right;color:#c4c4c4;">0.00</div>
<div class="t n" style="left:640px;top:336.5px;width:64.0px;height:11px;line-height:11px;transform-origin:100% 50%;text-align:right;">12 650.00</div>
<div class="t n d" style="left:8.6px;top:347.5px;width:77px;height:11px;line-height:11px;transform-origin:50% 50%;text-align:center;">25.09.2018</div>
<div class="t n" style="left:86px;top:347.5px;width:62.7px;height:11px;line-height:11px;transform-origin:100% 50%;text-align:right;">12 660.00</div>
<div class="t " style="left:153.7px;top:347.5px;width:75px;height:11px;line-height:11px;text-align:center;color:#000080;margin-left:0.9px;">Клиент 4</div>
<div class="t " style="left:229.7px;top:347.5px;width:63px;height:11px;line-height:11px;text-align:center;color:#000080;margin-left:0.9px;letter-spacing:0.3px;">Выр Услуг</div>
<div class="t " style="left:293.7px;top:347.5px;width:53px;height:11px;line-height:11px;text-align:center;">+</div>
<div class="t n" style="left:348.6px;top:347.5px;width:54px;height:11px;line-height:11px;transform-origin:50% 50%;text-align:center;">36</div>
<div class="t " style="left:402.7px;top:347.5px;width:53px;height:11px;line-height:11px;text-align:center;margin-left:0.6px;">Окт</div>
<div class="t n d" style="left:457.6px;top:347.5px;width:71px;height:11px;line-height:11px;transform-origin:50% 50%;text-align:center;">31.10.2018</div>
<div class="t n" style="left:529.6px;top:347.5px;width:44px;height:11px;line-height:11px;transform-origin:50% 50%;text-align:center;">1</div>
<div class="t n" style="left:574px;top:347.5px;width:63.5px;height:11px;line-height:11px;transform-origin:100% 50%;text-align:right;color:#c4c4c4;">0.00</div>
<div class="t n" style="left:640px;top:347.5px;width:64.0px;height:11px;line-height:11px;transform-origin:100% 50%;text-align:right;">12 660.00</div>
<div class="t n d" style="left:8.6px;top:358.5px;width:77px;height:11px;line-height:11px;transform-origin:50% 50%;text-align:center;">30.09.2018</div>
<div class="t n" style="left:86px;top:358.5px;width:62.7px;height:11px;line-height:11px;transform-origin:100% 50%;text-align:right;">12 670.00</div>
<div class="t " style="left:153.7px;top:358.5px;width:75px;height:11px;line-height:11px;text-align:center;color:#000080;margin-left:0.9px;">Клиент 2</div>
<div class="t " style="left:229.7px;top:358.5px;width:63px;height:11px;line-height:11px;text-align:center;color:#000080;margin-left:0.9px;">Выручка</div>
<div class="t " style="left:293.7px;top:358.5px;width:53px;height:11px;line-height:11px;text-align:center;">+</div>
<div class="t n" style="left:348.6px;top:358.5px;width:54px;height:11px;line-height:11px;transform-origin:50% 50%;text-align:center;">37</div>
<div class="t " style="left:402.7px;top:358.5px;width:53px;height:11px;line-height:11px;text-align:center;margin-left:0.6px;">Ноя</div>
<div class="t n d" style="left:457.6px;top:358.5px;width:71px;height:11px;line-height:11px;transform-origin:50% 50%;text-align:center;">06.11.2018</div>
<div class="t bn" style="left:529.6px;top:358.5px;width:44px;height:11px;line-height:11px;text-align:center;">7</div>
<div class="t n" style="left:574px;top:358.5px;width:63.5px;height:11px;line-height:11px;transform-origin:100% 50%;text-align:right;color:#c4c4c4;">0.00</div>
<div class="t n" style="left:640px;top:358.5px;width:64.0px;height:11px;line-height:11px;transform-origin:100% 50%;text-align:right;">12 670.00</div>
<div class="t n d" style="left:8.6px;top:369.5px;width:77px;height:11px;line-height:11px;transform-origin:50% 50%;text-align:center;">05.10.2018</div>
<div class="t n" style="left:86px;top:369.5px;width:62.7px;height:11px;line-height:11px;transform-origin:100% 50%;text-align:right;">12 680.00</div>
<div class="t " style="left:153.7px;top:369.5px;width:75px;height:11px;line-height:11px;text-align:center;color:#000080;margin-left:0.9px;">Клиент 3</div>
<div class="t " style="left:229.7px;top:369.5px;width:63px;height:11px;line-height:11px;text-align:center;color:#000080;margin-left:0.9px;letter-spacing:0.3px;">Выр Услуг</div>
<div class="t " style="left:293.7px;top:369.5px;width:53px;height:11px;line-height:11px;text-align:center;">+</div>
<div class="t n" style="left:348.6px;top:369.5px;width:54px;height:11px;line-height:11px;transform-origin:50% 50%;text-align:center;">38</div>
<div class="t " style="left:402.7px;top:369.5px;width:53px;height:11px;line-height:11px;text-align:center;margin-left:0.6px;">Ноя</div>
<div class="t n d" style="left:457.6px;top:369.5px;width:71px;height:11px;line-height:11px;transform-origin:50% 50%;text-align:center;">12.11.2018</div>
<div class="t bn" style="left:529.6px;top:369.5px;width:44px;height:11px;line-height:11px;text-align:center;">13</div>
<div class="t n" style="left:574px;top:369.5px;width:63.5px;height:11px;line-height:11px;transform-origin:100% 50%;text-align:right;color:#c4c4c4;">0.00</div>
<div class="t n" style="left:640px;top:369.5px;width:64.0px;height:11px;line-height:11px;transform-origin:100% 50%;text-align:right;">12 680.00</div>
<div class="t n d" style="left:8.6px;top:380.5px;width:77px;height:11px;line-height:11px;transform-origin:50% 50%;text-align:center;">10.10.2018</div>
<div class="t n" style="left:86px;top:380.5px;width:62.7px;height:11px;line-height:11px;transform-origin:100% 50%;text-align:right;">12 690.00</div>
<div class="t " style="left:153.7px;top:380.5px;width:75px;height:11px;line-height:11px;text-align:center;color:#000080;margin-left:0.9px;">Клиент 4</div>
<div class="t " style="left:229.7px;top:380.5px;width:63px;height:11px;line-height:11px;text-align:center;color:#000080;margin-left:0.9px;">Выручка</div>
<div class="t " style="left:293.7px;top:380.5px;width:53px;height:11px;line-height:11px;text-align:center;">+</div>
<div class="t n" style="left:348.6px;top:380.5px;width:54px;height:11px;line-height:11px;transform-origin:50% 50%;text-align:center;">39</div>
<div class="t " style="left:402.7px;top:380.5px;width:53px;height:11px;line-height:11px;text-align:center;margin-left:0.6px;">Ноя</div>
<div class="t n d" style="left:457.6px;top:380.5px;width:71px;height:11px;line-height:11px;transform-origin:50% 50%;text-align:center;">18.11.2018</div>
<div class="t n" style="left:529.6px;top:380.5px;width:44px;height:11px;line-height:11px;transform-origin:50% 50%;text-align:center;color:#c4c4c4;margin-left:-0.6px;">19</div>
<div class="t n" style="left:574px;top:380.5px;width:63.5px;height:11px;line-height:11px;transform-origin:100% 50%;text-align:right;">12 690.00</div>
<div class="t n" style="left:640px;top:380.5px;width:63.5px;height:11px;line-height:11px;transform-origin:100% 50%;text-align:right;color:#c4c4c4;">0.00</div>
<div class="t n d" style="left:709.6px;top:380.5px;width:72px;height:11px;line-height:11px;transform-origin:50% 50%;text-align:center;">15.09.2018</div>
<div class="t n" style="left:782px;top:380.5px;width:67.69999999999999px;height:11px;line-height:11px;transform-origin:100% 50%;text-align:right;">12 690.00</div>
<div class="t n d" style="left:8.6px;top:391.5px;width:77px;height:11px;line-height:11px;transform-origin:50% 50%;text-align:center;">15.10.2018</div>
<div class="t n" style="left:86px;top:391.5px;width:62.7px;height:11px;line-height:11px;transform-origin:100% 50%;text-align:right;">10 100.00</div>
<div class="t " style="left:153.7px;top:391.5px;width:75px;height:11px;line-height:11px;text-align:center;color:#000080;margin-left:0.9px;">Клиент 2</div>
<div class="t b" style="left:229.7px;top:391.5px;width:63px;height:11px;line-height:11px;text-align:center;color:#000080;margin-left:0.9px;">Прочие</div>
<div class="t bn" style="left:348.6px;top:391.5px;width:54px;height:11px;line-height:11px;text-align:center;">30</div>
<div class="t " style="left:402.7px;top:391.5px;width:53px;height:11px;line-height:11px;text-align:center;margin-left:0.6px;">Ноя</div>
<div class="t n d" style="left:457.6px;top:391.5px;width:71px;height:11px;line-height:11px;transform-origin:50% 50%;text-align:center;">14.11.2018</div>
<div class="t n" style="left:529.6px;top:391.5px;width:44px;height:11px;line-height:11px;transform-origin:50% 50%;text-align:center;color:#c4c4c4;margin-left:-0.6px;">15</div>
<div class="t bn" style="left:574px;top:391.5px;width:62.6px;height:11px;line-height:11px;text-align:right;">10 100.00</div>
<div class="t n" style="left:640px;top:391.5px;width:63.5px;height:11px;line-height:11px;transform-origin:100% 50%;text-align:right;color:#c4c4c4;">0.00</div>
<div class="t n d" style="left:709.6px;top:391.5px;width:72px;height:11px;line-height:11px;transform-origin:50% 50%;text-align:center;">04.11.2018</div>
<div class="t bn" style="left:782px;top:391.5px;width:66.79999999999998px;height:11px;line-height:11px;text-align:right;">10 100.00</div>
<div class="t n d" style="left:8.6px;top:402.5px;width:77px;height:11px;line-height:11px;transform-origin:50% 50%;text-align:center;">20.10.2018</div>
<div class="t n" style="left:86px;top:402.5px;width:62.7px;height:11px;line-height:11px;transform-origin:100% 50%;text-align:right;">10 200.00</div>
<div class="t " style="left:153.7px;top:402.5px;width:75px;height:11px;line-height:11px;text-align:center;color:#000080;margin-left:0.9px;">Клиент 5</div>
<div class="t " style="left:229.7px;top:402.5px;width:63px;height:11px;line-height:11px;text-align:center;color:#000080;margin-left:0.9px;">Выручка</div>
<div class="t bn" style="left:348.6px;top:402.5px;width:54px;height:11px;line-height:11px;text-align:center;">30</div>
<div class="t " style="left:402.7px;top:402.5px;width:53px;height:11px;line-height:11px;text-align:center;margin-left:0.6px;">Ноя</div>
<div class="t n d" style="left:457.6px;top:402.5px;width:71px;height:11px;line-height:11px;transform-origin:50% 50%;text-align:center;">19.11.2018</div>
<div class="t n" style="left:529.6px;top:402.5px;width:44px;height:11px;line-height:11px;transform-origin:50% 50%;text-align:center;color:#c4c4c4;margin-left:-0.6px;">20</div>
<div class="t bn" style="left:574px;top:402.5px;width:62.6px;height:11px;line-height:11px;text-align:right;">10 200.00</div>
<div class="t n" style="left:640px;top:402.5px;width:63.5px;height:11px;line-height:11px;transform-origin:100% 50%;text-align:right;color:#c4c4c4;">0.00</div>
<div class="t n d" style="left:709.6px;top:402.5px;width:72px;height:11px;line-height:11px;transform-origin:50% 50%;text-align:center;">09.11.2018</div>
<div class="t bn" style="left:782px;top:402.5px;width:66.79999999999998px;height:11px;line-height:11px;text-align:right;">10 200.00</div>
<div class="t n d" style="left:8.6px;top:413.5px;width:77px;height:11px;line-height:11px;transform-origin:50% 50%;text-align:center;">25.10.2018</div>
<div class="t bn" style="left:86px;top:413.5px;width:62.7px;height:11px;line-height:11px;text-align:right;">100 300.00</div>
<div class="t " style="left:153.7px;top:413.5px;width:75px;height:11px;line-height:11px;text-align:center;color:#000080;margin-left:0.9px;">Клиент 1</div>
<div class="t " style="left:229.7px;top:413.5px;width:63px;height:11px;line-height:11px;text-align:center;color:#000080;margin-left:0.9px;">Выручка</div>
<div class="t bn" style="left:348.6px;top:413.5px;width:54px;height:11px;line-height:11px;text-align:center;">30</div>
<div class="t " style="left:402.7px;top:413.5px;width:53px;height:11px;line-height:11px;text-align:center;margin-left:0.6px;">Ноя</div>
<div class="t n d" style="left:457.6px;top:413.5px;width:71px;height:11px;line-height:11px;transform-origin:50% 50%;text-align:center;">24.11.2018</div>
<div class="t n" style="left:529.6px;top:413.5px;width:44px;height:11px;line-height:11px;transform-origin:50% 50%;text-align:center;">25</div>
<div class="t n" style="left:574px;top:413.5px;width:63.5px;height:11px;line-height:11px;transform-origin:100% 50%;text-align:right;color:#c4c4c4;">0.00</div>
<div class="t bn" style="left:640px;top:413.5px;width:63.3px;height:11px;line-height:11px;text-align:right;">100 300.00</div>
<div class="t n d" style="left:8.6px;top:424.5px;width:77px;height:11px;line-height:11px;transform-origin:50% 50%;text-align:center;">30.10.2018</div>
<div class="t n" style="left:86px;top:424.5px;width:62.7px;height:11px;line-height:11px;transform-origin:100% 50%;text-align:right;">10 400.00</div>
<div class="t " style="left:153.7px;top:424.5px;width:75px;height:11px;line-height:11px;text-align:center;color:#000080;margin-left:0.9px;">Клиент 6</div>
<div class="t " style="left:229.7px;top:424.5px;width:63px;height:11px;line-height:11px;text-align:center;color:#000080;margin-left:0.9px;">Выручка</div>
<div class="t bn" style="left:348.6px;top:424.5px;width:54px;height:11px;line-height:11px;text-align:center;">30</div>
<div class="t " style="left:402.7px;top:424.5px;width:53px;height:11px;line-height:11px;text-align:center;margin-left:0.6px;">Ноя</div>
<div class="t n d" style="left:457.6px;top:424.5px;width:71px;height:11px;line-height:11px;transform-origin:50% 50%;text-align:center;">29.11.2018</div>
<div class="t n" style="left:529.6px;top:424.5px;width:44px;height:11px;line-height:11px;transform-origin:50% 50%;text-align:center;color:#c4c4c4;margin-left:-0.6px;">30</div>
<div class="t bn" style="left:574px;top:424.5px;width:62.6px;height:11px;line-height:11px;text-align:right;">10 400.00</div>
<div class="t n" style="left:640px;top:424.5px;width:63.5px;height:11px;line-height:11px;transform-origin:100% 50%;text-align:right;color:#c4c4c4;">0.00</div>
<div class="t n d" style="left:709.6px;top:424.5px;width:72px;height:11px;line-height:11px;transform-origin:50% 50%;text-align:center;">19.11.2018</div>
<div class="t bn" style="left:782px;top:424.5px;width:66.79999999999998px;height:11px;line-height:11px;text-align:right;">10 400.00</div>
<div class="t n d" style="left:8.6px;top:435.5px;width:77px;height:11px;line-height:11px;transform-origin:50% 50%;text-align:center;">04.11.2018</div>
<div class="t n" style="left:86px;top:435.5px;width:62.7px;height:11px;line-height:11px;transform-origin:100% 50%;text-align:right;">10 500.00</div>
<div class="t " style="left:153.7px;top:435.5px;width:75px;height:11px;line-height:11px;text-align:center;color:#000080;margin-left:0.9px;">Клиент 5</div>
<div class="t " style="left:229.7px;top:435.5px;width:63px;height:11px;line-height:11px;text-align:center;color:#000080;margin-left:0.9px;letter-spacing:0.3px;">Выр Услуг</div>
<div class="t bn" style="left:348.6px;top:435.5px;width:54px;height:11px;line-height:11px;text-align:center;">30</div>
<div class="t " style="left:402.7px;top:435.5px;width:53px;height:11px;line-height:11px;text-align:center;margin-left:0.6px;">Дек</div>
<div class="t bn" style="left:457.6px;top:435.5px;width:71px;height:11px;line-height:11px;text-align:center;">04.12.2018</div>
<div class="t n" style="left:529.6px;top:435.5px;width:44px;height:11px;line-height:11px;transform-origin:50% 50%;text-align:center;">35</div>
<div class="t n" style="left:574px;top:435.5px;width:63.5px;height:11px;line-height:11px;transform-origin:100% 50%;text-align:right;color:#c4c4c4;">0.00</div>
<div class="t n" style="left:640px;top:435.5px;width:64.0px;height:11px;line-height:11px;transform-origin:100% 50%;text-align:right;">10 500.00</div>
<div class="t n d" style="left:8.6px;top:446.5px;width:77px;height:11px;line-height:11px;transform-origin:50% 50%;text-align:center;">09.11.2018</div>
<div class="t n" style="left:86px;top:446.5px;width:62.7px;height:11px;line-height:11px;transform-origin:100% 50%;text-align:right;">10 600.00</div>
<div class="t " style="left:153.7px;top:446.5px;width:75px;height:11px;line-height:11px;text-align:center;color:#000080;margin-left:0.9px;">Клиент 4</div>
<div class="t " style="left:229.7px;top:446.5px;width:63px;height:11px;line-height:11px;text-align:center;color:#000080;margin-left:0.9px;">Выручка</div>
<div class="t bn" style="left:348.6px;top:446.5px;width:54px;height:11px;line-height:11px;text-align:center;">30</div>
<div class="t " style="left:402.7px;top:446.5px;width:53px;height:11px;line-height:11px;text-align:center;margin-left:0.6px;">Дек</div>
<div class="t bn" style="left:457.6px;top:446.5px;width:71px;height:11px;line-height:11px;text-align:center;">09.12.2018</div>
<div class="t n" style="left:529.6px;top:446.5px;width:44px;height:11px;line-height:11px;transform-origin:50% 50%;text-align:center;">40</div>
<div class="t n" style="left:574px;top:446.5px;width:63.5px;height:11px;line-height:11px;transform-origin:100% 50%;text-align:right;color:#c4c4c4;">0.00</div>
<div class="t n" style="left:640px;top:446.5px;width:64.0px;height:11px;line-height:11px;transform-origin:100% 50%;text-align:right;">10 600.00</div>
<div class="t n d" style="left:8.6px;top:457.5px;width:77px;height:11px;line-height:11px;transform-origin:50% 50%;text-align:center;">14.11.2018</div>
<div class="t n" style="left:86px;top:457.5px;width:62.7px;height:11px;line-height:11px;transform-origin:100% 50%;text-align:right;">10 700.00</div>
<div class="t " style="left:153.7px;top:457.5px;width:75px;height:11px;line-height:11px;text-align:center;color:#000080;margin-left:0.9px;">Клиент 2</div>
<div class="t " style="left:229.7px;top:457.5px;width:63px;height:11px;line-height:11px;text-align:center;color:#000080;margin-left:0.9px;">Выручка</div>
<div class="t bn" style="left:348.6px;top:457.5px;width:54px;height:11px;line-height:11px;text-align:center;">30</div>
<div class="t " style="left:402.7px;top:457.5px;width:53px;height:11px;line-height:11px;text-align:center;margin-left:0.6px;">Дек</div>
<div class="t bn" style="left:457.6px;top:457.5px;width:71px;height:11px;line-height:11px;text-align:center;">14.12.2018</div>
<div class="t n" style="left:529.6px;top:457.5px;width:44px;height:11px;line-height:11px;transform-origin:50% 50%;text-align:center;color:#c4c4c4;margin-left:-0.6px;">45</div>
<div class="t bn" style="left:574px;top:457.5px;width:62.6px;height:11px;line-height:11px;text-align:right;">10 700.00</div>
<div class="t n" style="left:640px;top:457.5px;width:63.5px;height:11px;line-height:11px;transform-origin:100% 50%;text-align:right;color:#c4c4c4;">0.00</div>
<div class="t n d" style="left:709.6px;top:457.5px;width:72px;height:11px;line-height:11px;transform-origin:50% 50%;text-align:center;">24.11.2018</div>
<div class="t bn" style="left:782px;top:457.5px;width:66.79999999999998px;height:11px;line-height:11px;text-align:right;">10 700.00</div>
<div class="t n d" style="left:8.6px;top:468.5px;width:77px;height:11px;line-height:11px;transform-origin:50% 50%;text-align:center;">19.11.2018</div>
<div class="t n" style="left:86px;top:468.5px;width:62.7px;height:11px;line-height:11px;transform-origin:100% 50%;text-align:right;">10 800.00</div>
<div class="t " style="left:153.7px;top:468.5px;width:75px;height:11px;line-height:11px;text-align:center;color:#000080;margin-left:0.9px;">Клиент 6</div>
<div class="t " style="left:229.7px;top:468.5px;width:63px;height:11px;line-height:11px;text-align:center;color:#000080;margin-left:0.9px;">Выручка</div>
<div class="t bn" style="left:348.6px;top:468.5px;width:54px;height:11px;line-height:11px;text-align:center;">30</div>
<div class="t " style="left:402.7px;top:468.5px;width:53px;height:11px;line-height:11px;text-align:center;margin-left:0.6px;">Дек</div>
<div class="t bn" style="left:457.6px;top:468.5px;width:71px;height:11px;line-height:11px;text-align:center;">19.12.2018</div>
<div class="t n" style="left:529.6px;top:468.5px;width:44px;height:11px;line-height:11px;transform-origin:50% 50%;text-align:center;color:#c4c4c4;margin-left:-0.6px;">50</div>
<div class="t bn" style="left:574px;top:468.5px;width:62.6px;height:11px;line-height:11px;text-align:right;">10 800.00</div>
<div class="t n" style="left:640px;top:468.5px;width:63.5px;height:11px;line-height:11px;transform-origin:100% 50%;text-align:right;color:#c4c4c4;">0.00</div>
<div class="t n d" style="left:709.6px;top:468.5px;width:72px;height:11px;line-height:11px;transform-origin:50% 50%;text-align:center;">29.11.2018</div>
<div class="t n" style="left:782px;top:468.5px;width:67.69999999999999px;height:11px;line-height:11px;transform-origin:100% 50%;text-align:right;">1 800.00</div>
<div class="t bn" style="left:852.6px;top:468.5px;width:70px;height:11px;line-height:11px;text-align:center;">04.12.2018</div>
<div class="t n d" style="left:8.6px;top:479.5px;width:77px;height:11px;line-height:11px;transform-origin:50% 50%;text-align:center;">24.11.2018</div>
<div class="t n" style="left:86px;top:479.5px;width:62.7px;height:11px;line-height:11px;transform-origin:100% 50%;text-align:right;">10 900.00</div>
<div class="t " style="left:153.7px;top:479.5px;width:75px;height:11px;line-height:11px;text-align:center;color:#000080;margin-left:0.9px;">Клиент 4</div>
<div class="t " style="left:229.7px;top:479.5px;width:63px;height:11px;line-height:11px;text-align:center;color:#000080;margin-left:0.9px;">Выручка</div>
<div class="t bn" style="left:348.6px;top:479.5px;width:54px;height:11px;line-height:11px;text-align:center;">30</div>
<div class="t " style="left:402.7px;top:479.5px;width:53px;height:11px;line-height:11px;text-align:center;margin-left:0.6px;">Дек</div>
<div class="t bn" style="left:457.6px;top:479.5px;width:71px;height:11px;line-height:11px;text-align:center;">24.12.2018</div>
<div class="t n" style="left:529.6px;top:479.5px;width:44px;height:11px;line-height:11px;transform-origin:50% 50%;text-align:center;color:#c4c4c4;margin-left:-0.6px;">55</div>
<div class="t bn" style="left:574px;top:479.5px;width:62.6px;height:11px;line-height:11px;text-align:right;">10 900.00</div>
<div class="t n" style="left:640px;top:479.5px;width:63.5px;height:11px;line-height:11px;transform-origin:100% 50%;text-align:right;color:#c4c4c4;">0.00</div>
<div class="t n d" style="left:709.6px;top:479.5px;width:72px;height:11px;line-height:11px;transform-origin:50% 50%;text-align:center;">30.10.2018</div>
<div class="t bn" style="left:782px;top:479.5px;width:66.79999999999998px;height:11px;line-height:11px;text-align:right;">10 900.00</div>
<div class="t n d" style="left:8.6px;top:490.5px;width:77px;height:11px;line-height:11px;transform-origin:50% 50%;text-align:center;">29.11.2018</div>
<div class="t n" style="left:86px;top:490.5px;width:62.7px;height:11px;line-height:11px;transform-origin:100% 50%;text-align:right;">11 000.00</div>
<div class="t b" style="left:153.7px;top:490.5px;width:75px;height:11px;line-height:11px;text-align:center;color:#000080;margin-left:0.9px;">Клиент 3</div>
<div class="t " style="left:229.7px;top:490.5px;width:63px;height:11px;line-height:11px;text-align:center;color:#000080;margin-left:0.9px;letter-spacing:0.3px;">Выр Услуг</div>
<div class="t bn" style="left:348.6px;top:490.5px;width:54px;height:11px;line-height:11px;text-align:center;">30</div>
<div class="t " style="left:402.7px;top:490.5px;width:53px;height:11px;line-height:11px;text-align:center;margin-left:0.6px;">Дек</div>
<div class="t bn" style="left:457.6px;top:490.5px;width:71px;height:11px;line-height:11px;text-align:center;">29.12.2018</div>
<div class="t n" style="left:529.6px;top:490.5px;width:44px;height:11px;line-height:11px;transform-origin:50% 50%;text-align:center;color:#c4c4c4;margin-left:-0.6px;">60</div>
<div class="t bn" style="left:574px;top:490.5px;width:62.6px;height:11px;line-height:11px;text-align:right;">11 000.00</div>
<div class="t n" style="left:640px;top:490.5px;width:63.5px;height:11px;line-height:11px;transform-origin:100% 50%;text-align:right;color:#c4c4c4;">0.00</div>
<div class="t n d" style="left:709.6px;top:490.5px;width:72px;height:11px;line-height:11px;transform-origin:50% 50%;text-align:center;">19.12.2018</div>
<div class="t bn" style="left:782px;top:490.5px;width:66.79999999999998px;height:11px;line-height:11px;text-align:right;">11 000.00</div>
<div class="t bn" style="left:8.6px;top:501.5px;width:77px;height:11px;line-height:11px;text-align:center;">04.12.2018</div>
<div class="t n" style="left:86px;top:501.5px;width:62.7px;height:11px;line-height:11px;transform-origin:100% 50%;text-align:right;">11 100.00</div>
<div class="t " style="left:153.7px;top:501.5px;width:75px;height:11px;line-height:11px;text-align:center;color:#000080;margin-left:0.9px;">Клиент 2</div>
<div class="t " style="left:229.7px;top:501.5px;width:63px;height:11px;line-height:11px;text-align:center;color:#000080;margin-left:0.9px;">Выручка</div>
<div class="t bn" style="left:348.6px;top:501.5px;width:54px;height:11px;line-height:11px;text-align:center;">30</div>
<div class="t " style="left:402.7px;top:501.5px;width:53px;height:11px;line-height:11px;text-align:center;margin-left:0.6px;">Янв</div>
<div class="t bn" style="left:457.6px;top:501.5px;width:71px;height:11px;line-height:11px;text-align:center;">03.01.2019</div>
<div class="t n" style="left:529.6px;top:501.5px;width:44px;height:11px;line-height:11px;transform-origin:50% 50%;text-align:center;color:#c4c4c4;margin-left:-0.6px;">65</div>
<div class="t bn" style="left:574px;top:501.5px;width:62.6px;height:11px;line-height:11px;text-align:right;">11 100.00</div>
<div class="t n" style="left:640px;top:501.5px;width:63.5px;height:11px;line-height:11px;transform-origin:100% 50%;text-align:right;color:#c4c4c4;">0.00</div>
<div class="t n d" style="left:709.6px;top:501.5px;width:72px;height:11px;line-height:11px;transform-origin:50% 50%;text-align:center;">24.12.2018</div>
<div class="t n" style="left:782px;top:501.5px;width:67.69999999999999px;height:11px;line-height:11px;transform-origin:100% 50%;text-align:right;">11 100.00</div>
<div class="t bn" style="left:8.6px;top:512.5px;width:77px;height:11px;line-height:11px;text-align:center;">09.12.2018</div>
<div class="t n" style="left:86px;top:512.5px;width:62.7px;height:11px;line-height:11px;transform-origin:100% 50%;text-align:right;">11 200.00</div>
<div class="t b" style="left:153.7px;top:512.5px;width:75px;height:11px;line-height:11px;text-align:center;color:#000080;margin-left:0.9px;">Клиент 3</div>
<div class="t " style="left:229.7px;top:512.5px;width:63px;height:11px;line-height:11px;text-align:center;color:#000080;margin-left:0.9px;letter-spacing:0.3px;">Выр Услуг</div>
<div class="t bn" style="left:348.6px;top:512.5px;width:54px;height:11px;line-height:11px;text-align:center;">30</div>
<div class="t " style="left:402.7px;top:512.5px;width:53px;height:11px;line-height:11px;text-align:center;margin-left:0.6px;">Янв</div>
<div class="t bn" style="left:457.6px;top:512.5px;width:71px;height:11px;line-height:11px;text-align:center;">08.01.2019</div>
<div class="t n" style="left:529.6px;top:512.5px;width:44px;height:11px;line-height:11px;transform-origin:50% 50%;text-align:center;color:#c4c4c4;margin-left:-0.6px;">70</div>
<div class="t bn" style="left:574px;top:512.5px;width:62.6px;height:11px;line-height:11px;text-align:right;">11 200.00</div>
<div class="t n" style="left:640px;top:512.5px;width:63.5px;height:11px;line-height:11px;transform-origin:100% 50%;text-align:right;color:#c4c4c4;">0.00</div>
<div class="t n d" style="left:709.6px;top:512.5px;width:72px;height:11px;line-height:11px;transform-origin:50% 50%;text-align:center;">29.12.2018</div>
<div class="t n" style="left:782px;top:512.5px;width:67.69999999999999px;height:11px;line-height:11px;transform-origin:100% 50%;text-align:right;">11 200.00</div>
<div class="t bn" style="left:8.6px;top:523.5px;width:77px;height:11px;line-height:11px;text-align:center;">14.12.2018</div>
<div class="t n" style="left:86px;top:523.5px;width:62.7px;height:11px;line-height:11px;transform-origin:100% 50%;text-align:right;">11 300.00</div>
<div class="t " style="left:153.7px;top:523.5px;width:75px;height:11px;line-height:11px;text-align:center;color:#000080;margin-left:0.9px;">Клиент 1</div>
<div class="t " style="left:229.7px;top:523.5px;width:63px;height:11px;line-height:11px;text-align:center;color:#000080;margin-left:0.9px;">Выручка</div>
<div class="t bn" style="left:348.6px;top:523.5px;width:54px;height:11px;line-height:11px;text-align:center;">30</div>
<div class="t " style="left:402.7px;top:523.5px;width:53px;height:11px;line-height:11px;text-align:center;margin-left:0.6px;">Янв</div>
<div class="t bn" style="left:457.6px;top:523.5px;width:71px;height:11px;line-height:11px;text-align:center;">13.01.2019</div>
<div class="t n" style="left:529.6px;top:523.5px;width:44px;height:11px;line-height:11px;transform-origin:50% 50%;text-align:center;color:#c4c4c4;margin-left:-0.6px;">75</div>
<div class="t bn" style="left:574px;top:523.5px;width:62.6px;height:11px;line-height:11px;text-align:right;">11 300.00</div>
<div class="t n" style="left:640px;top:523.5px;width:63.5px;height:11px;line-height:11px;transform-origin:100% 50%;text-align:right;color:#c4c4c4;">0.00</div>
<div class="t n d" style="left:709.6px;top:523.5px;width:72px;height:11px;line-height:11px;transform-origin:50% 50%;text-align:center;">03.01.2019</div>
<div class="t n" style="left:782px;top:523.5px;width:67.69999999999999px;height:11px;line-height:11px;transform-origin:100% 50%;text-align:right;">11 300.00</div>
<div class="t bn" style="left:8.6px;top:534.5px;width:77px;height:11px;line-height:11px;text-align:center;">19.12.2018</div>
<div class="t n" style="left:86px;top:534.5px;width:62.7px;height:11px;line-height:11px;transform-origin:100% 50%;text-align:right;">11 400.00</div>
<div class="t " style="left:153.7px;top:534.5px;width:75px;height:11px;line-height:11px;text-align:center;color:#000080;margin-left:0.9px;">Клиент 5</div>
<div class="t " style="left:229.7px;top:534.5px;width:63px;height:11px;line-height:11px;text-align:center;color:#000080;margin-left:0.9px;letter-spacing:0.3px;">Выр Услуг</div>
<div class="t bn" style="left:348.6px;top:534.5px;width:54px;height:11px;line-height:11px;text-align:center;">30</div>
<div class="t " style="left:402.7px;top:534.5px;width:53px;height:11px;line-height:11px;text-align:center;margin-left:0.6px;">Янв</div>
<div class="t bn" style="left:457.6px;top:534.5px;width:71px;height:11px;line-height:11px;text-align:center;">18.01.2019</div>
<div class="t n" style="left:529.6px;top:534.5px;width:44px;height:11px;line-height:11px;transform-origin:50% 50%;text-align:center;">80</div>
<div class="t n" style="left:574px;top:534.5px;width:63.5px;height:11px;line-height:11px;transform-origin:100% 50%;text-align:right;color:#c4c4c4;">0.00</div>
<div class="t n" style="left:640px;top:534.5px;width:64.0px;height:11px;line-height:11px;transform-origin:100% 50%;text-align:right;">11 400.00</div>
<div class="t bn" style="left:8.6px;top:545.5px;width:77px;height:11px;line-height:11px;text-align:center;">24.12.2018</div>
<div class="t n" style="left:86px;top:545.5px;width:62.7px;height:11px;line-height:11px;transform-origin:100% 50%;text-align:right;">11 500.00</div>
<div class="t " style="left:153.7px;top:545.5px;width:75px;height:11px;line-height:11px;text-align:center;color:#000080;margin-left:0.9px;">Клиент 1</div>
<div class="t " style="left:229.7px;top:545.5px;width:63px;height:11px;line-height:11px;text-align:center;color:#000080;margin-left:0.9px;">Выручка</div>
<div class="t bn" style="left:348.6px;top:545.5px;width:54px;height:11px;line-height:11px;text-align:center;">30</div>
<div class="t " style="left:402.7px;top:545.5px;width:53px;height:11px;line-height:11px;text-align:center;margin-left:0.6px;">Янв</div>
<div class="t bn" style="left:457.6px;top:545.5px;width:71px;height:11px;line-height:11px;text-align:center;">23.01.2019</div>
<div class="t n" style="left:529.6px;top:545.5px;width:44px;height:11px;line-height:11px;transform-origin:50% 50%;text-align:center;">85</div>
<div class="t n" style="left:574px;top:545.5px;width:63.5px;height:11px;line-height:11px;transform-origin:100% 50%;text-align:right;color:#c4c4c4;">0.00</div>
<div class="t n" style="left:640px;top:545.5px;width:64.0px;height:11px;line-height:11px;transform-origin:100% 50%;text-align:right;">11 500.00</div>
<div class="r" style="left:7px;top:260px;width:913px;height:1px;background:#000;"></div>
<div class="r" style="left:7px;top:282px;width:913px;height:1px;background:#000;"></div>
<div class="r" style="left:7px;top:293px;width:913px;height:1px;background:#000;"></div>
<div class="r" style="left:7px;top:304px;width:913px;height:1px;background:#000;"></div>
<div class="r" style="left:7px;top:315px;width:913px;height:1px;background:#000;"></div>
<div class="r" style="left:7px;top:326px;width:913px;height:1px;background:#000;"></div>
<div class="r" style="left:7px;top:337px;width:913px;height:1px;background:#000;"></div>
<div class="r" style="left:7px;top:348px;width:913px;height:1px;background:#000;"></div>
<div class="r" style="left:7px;top:359px;width:913px;height:1px;background:#000;"></div>
<div class="r" style="left:7px;top:370px;width:913px;height:1px;background:#000;"></div>
<div class="r" style="left:7px;top:381px;width:913px;height:1px;background:#000;"></div>
<div class="r" style="left:7px;top:392px;width:913px;height:1px;background:#000;"></div>
<div class="r" style="left:7px;top:403px;width:913px;height:1px;background:#000;"></div>
<div class="r" style="left:7px;top:414px;width:913px;height:1px;background:#000;"></div>
<div class="r" style="left:7px;top:425px;width:913px;height:1px;background:#000;"></div>
<div class="r" style="left:7px;top:436px;width:913px;height:1px;background:#000;"></div>
<div class="r" style="left:7px;top:447px;width:913px;height:1px;background:#000;"></div>
<div class="r" style="left:7px;top:458px;width:913px;height:1px;background:#000;"></div>
<div class="r" style="left:7px;top:469px;width:913px;height:1px;background:#000;"></div>
<div class="r" style="left:7px;top:480px;width:913px;height:1px;background:#000;"></div>
<div class="r" style="left:7px;top:491px;width:913px;height:1px;background:#000;"></div>
<div class="r" style="left:7px;top:502px;width:913px;height:1px;background:#000;"></div>
<div class="r" style="left:7px;top:513px;width:913px;height:1px;background:#000;"></div>
<div class="r" style="left:7px;top:524px;width:913px;height:1px;background:#000;"></div>
<div class="r" style="left:7px;top:535px;width:913px;height:1px;background:#000;"></div>
<div class="r" style="left:7px;top:546px;width:913px;height:1px;background:#000;"></div>
<div class="r" style="left:7px;top:260px;width:1px;height:23px;background:#000;"></div>
<div class="r" style="left:7px;top:293px;width:1px;height:257px;background:#000;"></div>
<div class="r" style="left:85px;top:260px;width:1px;height:23px;background:#000;"></div>
<div class="r" style="left:85px;top:293px;width:1px;height:257px;background:#000;"></div>
<div class="r" style="left:153px;top:260px;width:1px;height:23px;background:#000;"></div>
<div class="r" style="left:153px;top:293px;width:1px;height:257px;background:#000;"></div>
<div class="r" style="left:229px;top:260px;width:1px;height:23px;background:#000;"></div>
<div class="r" style="left:229px;top:293px;width:1px;height:257px;background:#000;"></div>
<div class="r" style="left:293px;top:260px;width:1px;height:23px;background:#000;"></div>
<div class="r" style="left:293px;top:293px;width:1px;height:257px;background:#000;"></div>
<div class="r" style="left:347px;top:260px;width:1px;height:23px;background:#000;"></div>
<div class="r" style="left:347px;top:293px;width:1px;height:257px;background:#000;"></div>
<div class="r" style="left:402px;top:260px;width:1px;height:23px;background:#000;"></div>
<div class="r" style="left:402px;top:293px;width:1px;height:257px;background:#000;"></div>
<div class="r" style="left:456px;top:260px;width:1px;height:23px;background:#000;"></div>
<div class="r" style="left:456px;top:293px;width:1px;height:257px;background:#000;"></div>
<div class="r" style="left:528px;top:260px;width:1px;height:23px;background:#000;"></div>
<div class="r" style="left:528px;top:293px;width:1px;height:257px;background:#000;"></div>
<div class="r" style="left:573px;top:260px;width:1px;height:23px;background:#000;"></div>
<div class="r" style="left:573px;top:293px;width:1px;height:257px;background:#000;"></div>
<div class="r" style="left:639px;top:260px;width:1px;height:23px;background:#000;"></div>
<div class="r" style="left:639px;top:293px;width:1px;height:257px;background:#000;"></div>
<div class="r" style="left:708px;top:260px;width:1px;height:23px;background:#000;"></div>
<div class="r" style="left:708px;top:293px;width:1px;height:257px;background:#000;"></div>
<div class="r" style="left:781px;top:260px;width:1px;height:23px;background:#000;"></div>
<div class="r" style="left:781px;top:293px;width:1px;height:257px;background:#000;"></div>
<div class="r" style="left:851px;top:260px;width:1px;height:23px;background:#000;"></div>
<div class="r" style="left:851px;top:293px;width:1px;height:257px;background:#000;"></div>
<div class="r" style="left:7px;top:282px;width:1px;height:12px;background:#000;"></div>
<div class="r" style="left:94px;top:283px;width:1px;height:10px;background:#000;"></div>
<div class="r" style="left:293px;top:282px;width:1px;height:12px;background:#000;"></div>
<div class="r" style="left:347px;top:282px;width:1px;height:12px;background:#000;"></div>
<div class="r" style="left:402px;top:282px;width:1px;height:12px;background:#000;"></div>
<div class="r" style="left:456px;top:282px;width:1px;height:12px;background:#000;"></div>
<div class="r" style="left:528px;top:282px;width:1px;height:12px;background:#000;"></div>
<div class="r" style="left:573px;top:282px;width:1px;height:12px;background:#000;"></div>
<div class="r" style="left:639px;top:282px;width:1px;height:12px;background:#000;"></div>
<div class="r" style="left:708px;top:282px;width:1px;height:12px;background:#000;"></div>
<div class="r" style="left:781px;top:282px;width:1px;height:12px;background:#000;"></div>
<div class="r" style="left:851px;top:282px;width:1px;height:12px;background:#000;"></div>
<div class="r" style="left:152px;top:325px;width:79px;height:14px;border:1px solid #330000;box-sizing:border-box;"></div>
<div class="r" style="left:153px;top:326px;width:77px;height:12px;border:1px solid #fff;box-sizing:border-box;"></div>
<div class="r" style="left:154px;top:327px;width:75px;height:10px;border:1px solid #330000;box-sizing:border-box;"></div>
<div class="r" style="left:225px;top:335px;width:5px;height:3px;background:#fff;"></div>
<div class="r" style="left:222px;top:336px;width:4px;height:2px;background:#330000;"></div>
<div class="r" style="left:227px;top:335px;width:2px;height:2px;background:#330000;"></div>
<div class="fb" style="left:229px;top:326px;width:12px;"><i style="left:3.6px"></i></div>
<div class="r" style="left:153px;top:337px;width:88px;height:82px;background:#fff;border:1px solid #000;box-sizing:border-box;"></div>
<div class="r" style="left:153px;top:337px;width:1px;height:2px;background:#fff;"></div>
<div class="r" style="left:152px;top:337px;width:1px;height:2px;background:#330000;"></div>
<div class="r" style="left:154px;top:338px;width:75px;height:10px;background:#3399ff;"></div>
<div class="t ctl" style="left:157px;top:339.3px;width:70px;height:10px;line-height:10px;letter-spacing:-0.25px;word-spacing:1px;color:#fff;">Клиент 5</div>
<div class="t ctl" style="left:157px;top:349.3px;width:70px;height:10px;line-height:10px;letter-spacing:-0.25px;word-spacing:1px;">Клиент 6</div>
<div class="t ctl" style="left:157px;top:359.3px;width:70px;height:10px;line-height:10px;letter-spacing:-0.25px;word-spacing:1px;">Клиент 7</div>
<div class="t ctl" style="left:157px;top:369.3px;width:70px;height:10px;line-height:10px;letter-spacing:-0.75px;">Банк</div>
<div class="r" style="left:230px;top:338px;width:10px;height:80px;background:#f0f0f0;"></div>
<div class="r" style="left:230px;top:360px;width:10px;height:23px;background:#cdcdcd;"></div>
<svg class="r" style="left:230px;top:338px;" width="10" height="11" viewBox="0 0 10 11"><path d="M1.6 8.7 L5 5.2 L8.4 8.7" fill="none" stroke="#555" stroke-width="2"/></svg>
<svg class="r" style="left:230px;top:408px;" width="10" height="10" viewBox="0 0 10 10"><path d="M1.6 3.9 L5 7.4 L8.4 3.9" fill="none" stroke="#555" stroke-width="2"/></svg>
</body></html>
